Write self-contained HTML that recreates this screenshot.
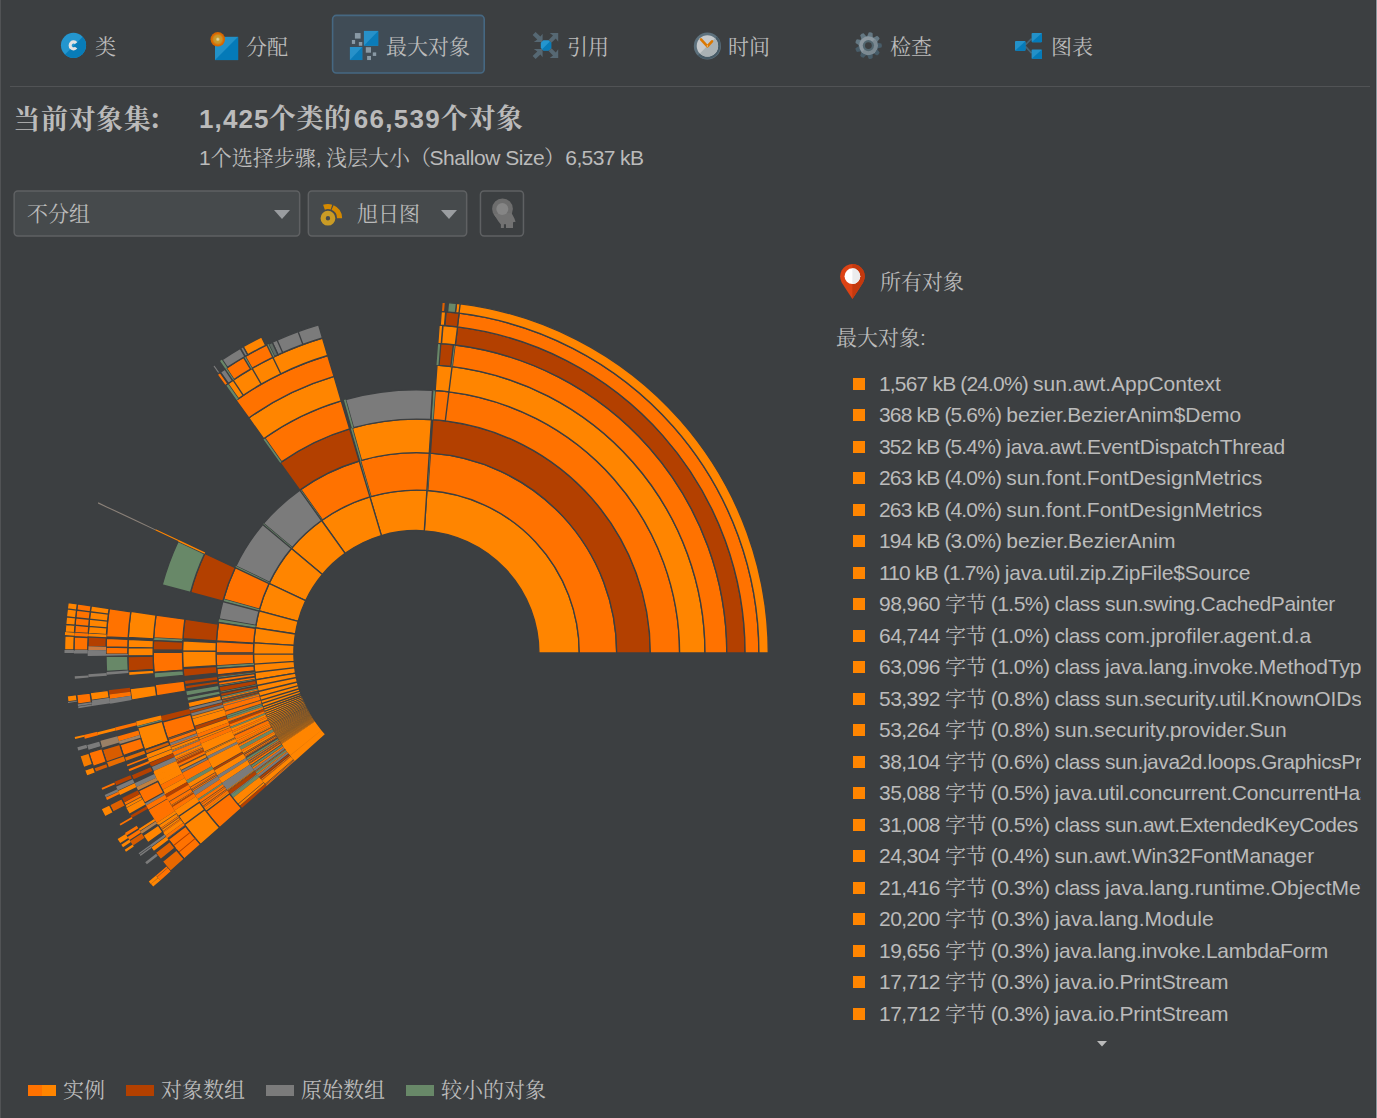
<!DOCTYPE html>
<html lang="zh">
<head>
<meta charset="utf-8">
<title>JProfiler - 最大对象</title>
<style>
html,body{margin:0;padding:0;}
body{width:1377px;height:1118px;overflow:hidden;background:#3c3f41;color:#bbbbbb;font-family:"Liberation Sans","Noto Serif CJK SC",sans-serif;font-size:20px;position:relative;}
.abs{position:absolute;}
.t{position:absolute;white-space:pre;line-height:24px;height:24px;}
.c{display:inline-block;width:21px;text-align:center;font-size:21px;overflow:visible;white-space:pre;line-height:0;font-family:"Liberation Sans","Noto Serif CJK SC",sans-serif;}
.tab{position:absolute;top:34.5px;font-size:21px;line-height:24px;white-space:pre;color:#bbbbbb;}
.edgeL{position:absolute;left:0;top:0;width:1px;height:1118px;background:#515355;}
.edgeR1{position:absolute;left:1375px;top:0;width:1px;height:1118px;background:#37393b;}
.edgeR2{position:absolute;left:1376px;top:0;width:1px;height:1118px;background:#8a969d;}
.sep{position:absolute;left:10px;top:86px;width:1360px;height:1px;background:#515355;}
.sel{position:absolute;left:332px;top:15px;width:151px;height:57px;border:1px solid #4a6a84;border-radius:4px;background:#414a52;}
.combo{position:absolute;top:191px;height:44px;border:1px solid #5e6060;border-radius:4px;background:#45494a;}
.row{position:absolute;left:879px;white-space:pre;font-size:21px;line-height:24px;height:24px;letter-spacing:-0.4px;color:#bbbbbb;}
.bul{position:absolute;left:853px;width:12px;height:12px;background:#ff8500;}
.list{position:absolute;left:836px;top:360px;width:525px;height:680px;overflow:hidden;}
.lg{position:absolute;top:1085px;width:28px;height:11px;}
</style>
</head>
<body>
<div class="edgeL"></div><div class="edgeR1"></div><div class="edgeR2"></div>
<div class="sep"></div>

<svg class="abs" style="left:0;top:0" width="1377" height="86" viewBox="0 0 1377 86">
<defs>
<radialGradient id="og" cx="0.5" cy="0.5" r="0.5"><stop offset="0" stop-color="#dcd6a8"/><stop offset="0.12" stop-color="#d8cc98"/><stop offset="0.3" stop-color="#c99c2c"/><stop offset="0.55" stop-color="#c8942a"/><stop offset="0.8" stop-color="#dc6800"/><stop offset="1" stop-color="#cc6600"/></radialGradient>
<clipPath id="c1"><circle cx="73.5" cy="45.35" r="12.55"/></clipPath>
</defs>
<rect x="332.6" y="15.4" width="151.6" height="57.6" rx="3.8" fill="#404c56" stroke="#466882" stroke-width="1.6"/>
<!-- class icon -->
<circle cx="73.5" cy="45.35" r="12.55" fill="#2496cf"/>
<path d="M89 30.5 L89 61 L58.5 61 Z" fill="#087cb8" clip-path="url(#c1)"/>
<path d="M76.09 47.64 A3.35 3.52 0 1 1 76.09 43.16" fill="none" stroke="#e2e2e2" stroke-width="3.1"/>
<!-- allocation icon -->
<rect x="215" y="36.8" width="23.1" height="23.3" fill="#2291c8"/>
<path d="M238.1 36.8 L238.1 60.1 L215 60.1 Z" fill="#047ab8"/>
<circle cx="217.8" cy="39.3" r="7.25" fill="url(#og)"/>
<!-- biggest objects icon -->
<rect x="363.9" y="30.9" width="14.3" height="14.85" fill="#2791c9"/>
<path d="M378.2 30.9 L378.2 45.75 L363.9 45.75 Z" fill="#0b7cb9"/>
<rect x="349.9" y="47" width="12.35" height="13.05" fill="#2791c9"/>
<path d="M362.25 47 L362.25 60.05 L349.9 60.05 Z" fill="#0b7cb9"/>
<g fill="#8999a5">
<rect x="354.9" y="33.05" width="5.7" height="5.55"/>
<rect x="351.9" y="40.0" width="3.2" height="3.95"/>
<rect x="358.85" y="42.0" width="3.4" height="3.75"/>
<rect x="365.8" y="47.2" width="5.2" height="5.5"/>
<rect x="372.8" y="52.4" width="3.4" height="3.55"/>
<rect x="367.1" y="55.95" width="3.9" height="4.1"/>
</g>
<!-- references icon -->
<g fill="#566873">
<path d="M542.6 41.9 L542.6 33.8 L540.4 36.6 L535.6 31.9 L532.6 34.9 L537.3 39.6 L533.8 41.9 Z"/>
<path d="M542.6 49.1 L542.6 57.2 L540.4 54.4 L535.6 59.1 L532.6 56.1 L537.3 51.4 L533.8 49.1 Z"/>
<path d="M558.2 33.0 L549.7 33.0 L553.0 35.6 L548.6 40.0 L551.4 42.8 L555.8 38.4 L558.2 41.8 Z"/>
<path d="M558.2 58.0 L549.7 58.0 L553.0 55.4 L548.6 51.0 L551.4 48.2 L555.8 52.6 L558.2 49.2 Z"/>
</g>
<path d="M543.4 40.2 L548.6 40.2 L551.2 42.8 L551.2 48.0 L548.6 50.6 L543.4 50.6 L540.8 48.0 L540.8 42.8 Z" fill="#2496cf"/>
<path d="M549.9 41.5 L551.2 42.8 L551.2 48.0 L548.6 50.6 L543.4 50.6 L542.1 49.3 Z" fill="#087cb8"/>
<!-- time icon -->
<circle cx="707.4" cy="46" r="13.6" fill="#5d717d"/>
<path d="M717.0 36.4 A13.6 13.6 0 0 1 697.8 55.6 Z" fill="#475b67"/>
<circle cx="707.4" cy="45.9" r="10.7" fill="#c6c9cb"/>
<path d="M715.0 38.3 A10.7 10.7 0 0 1 699.8 53.5 Z" fill="#a9b1b4"/>
<path d="M701.0 39.4 L707.4 46.3 L712.0 41.3" fill="none" stroke="#dc7800" stroke-width="2.6" stroke-linecap="round" stroke-linejoin="round"/>
<circle cx="707.4" cy="46" r="0.7" fill="#f0c890"/>
<!-- gear icon -->
<g transform="translate(868.4 45.6)">
<circle r="9.8" fill="#566a76"/>
<path transform="rotate(10)" d="M-2.9 -8.5 L-2.0 -13.0 Q0 -13.9 2.0 -13.0 L2.9 -8.5 Z" fill="#647883"/>
<path transform="rotate(50)" d="M-2.9 -8.5 L-2.0 -13.0 Q0 -13.9 2.0 -13.0 L2.9 -8.5 Z" fill="#647883"/>
<path transform="rotate(90)" d="M-2.9 -8.5 L-2.0 -13.0 Q0 -13.9 2.0 -13.0 L2.9 -8.5 Z" fill="#485d69"/>
<path transform="rotate(130)" d="M-2.9 -8.5 L-2.0 -13.0 Q0 -13.9 2.0 -13.0 L2.9 -8.5 Z" fill="#485d69"/>
<path transform="rotate(170)" d="M-2.9 -8.5 L-2.0 -13.0 Q0 -13.9 2.0 -13.0 L2.9 -8.5 Z" fill="#485d69"/>
<path transform="rotate(210)" d="M-2.9 -8.5 L-2.0 -13.0 Q0 -13.9 2.0 -13.0 L2.9 -8.5 Z" fill="#485d69"/>
<path transform="rotate(250)" d="M-2.9 -8.5 L-2.0 -13.0 Q0 -13.9 2.0 -13.0 L2.9 -8.5 Z" fill="#485d69"/>
<path transform="rotate(290)" d="M-2.9 -8.5 L-2.0 -13.0 Q0 -13.9 2.0 -13.0 L2.9 -8.5 Z" fill="#647883"/>
<path transform="rotate(330)" d="M-2.9 -8.5 L-2.0 -13.0 Q0 -13.9 2.0 -13.0 L2.9 -8.5 Z" fill="#647883"/>
<circle r="9.3" fill="#8b979f"/>
<path d="M6.58 -6.58 A9.3 9.3 0 0 1 -6.58 6.58 Z" fill="#7b8991"/>
<circle r="5.6" fill="#52666f"/>
<circle r="3.4" fill="#3c3f41"/>
</g>
<!-- graph icon -->
<path d="M1025.6 44.6 L1031.6 38.6 M1025.6 46.6 L1031.6 53.1" stroke="#4a6472" stroke-width="1.6" fill="none"/>
<rect x="1015" y="41.1" width="10.5" height="9.65" rx="0.9" fill="#2391c9"/><path d="M1025.2 41.4 L1025.5 42.0 L1025.5 49.85 Q1025.5 50.75 1024.6 50.75 L1015.9 50.75 L1015.3 50.45 Z" fill="#057bb9"/>
<rect x="1031.6" y="33.05" width="10.4" height="9.15" rx="0.9" fill="#2391c9"/><path d="M1041.7 33.349999999999994 L1042.0 33.949999999999996 L1042.0 41.3 Q1042.0 42.199999999999996 1041.1 42.199999999999996 L1032.5 42.199999999999996 L1031.8999999999999 41.9 Z" fill="#057bb9"/>
<rect x="1031.6" y="49.5" width="10.4" height="9.3" rx="0.9" fill="#2391c9"/><path d="M1041.7 49.8 L1042.0 50.4 L1042.0 57.9 Q1042.0 58.8 1041.1 58.8 L1032.5 58.8 L1031.8999999999999 58.5 Z" fill="#057bb9"/>
</svg>
<div class="tab" style="left:95px"><span class="c" style="width:21px;">类</span></div>
<div class="tab" style="left:246px"><span class="c" style="width:21px;">分</span><span class="c" style="width:21px;">配</span></div>
<div class="tab" style="left:386px"><span class="c" style="width:21px;">最</span><span class="c" style="width:21px;">大</span><span class="c" style="width:21px;">对</span><span class="c" style="width:21px;">象</span></div>
<div class="tab" style="left:567px"><span class="c" style="width:21px;">引</span><span class="c" style="width:21px;">用</span></div>
<div class="tab" style="left:728px"><span class="c" style="width:21px;">时</span><span class="c" style="width:21px;">间</span></div>
<div class="tab" style="left:890px"><span class="c" style="width:21px;">检</span><span class="c" style="width:21px;">查</span></div>
<div class="tab" style="left:1051px"><span class="c" style="width:21px;">图</span><span class="c" style="width:21px;">表</span></div>
<div class="t" style="left:13px;top:104px;font-size:27px;font-weight:bold;line-height:32px;height:32px;"><span class="c" style="width:27.6px;font-size:27px;">当</span><span class="c" style="width:27.6px;font-size:27px;">前</span><span class="c" style="width:27.6px;font-size:27px;">对</span><span class="c" style="width:27.6px;font-size:27px;">象</span><span class="c" style="width:27.6px;font-size:27px;">集</span></div>
<div class="t" style="left:148px;top:104px;font-size:27px;font-weight:bold;line-height:32px;height:32px;"><span class="c" style="width:27px;font-size:27px;">：</span></div>
<div class="t" style="left:199px;top:103px;font-size:26px;font-weight:bold;line-height:32px;height:32px;letter-spacing:1.1px">1,425</div>
<div class="t" style="left:353.8px;top:103px;font-size:26px;font-weight:bold;line-height:32px;height:32px;letter-spacing:1.3px">66,539</div>
<div class="t" style="left:268.5px;top:103px;font-size:27px;font-weight:bold;line-height:32px;height:32px;"><span class="c" style="width:27.6px;font-size:27px;">个</span><span class="c" style="width:27.6px;font-size:27px;">类</span><span class="c" style="width:27.6px;font-size:27px;">的</span></div>
<div class="t" style="left:440.5px;top:103px;font-size:27px;font-weight:bold;line-height:32px;height:32px;"><span class="c" style="width:27.6px;font-size:27px;">个</span><span class="c" style="width:27.6px;font-size:27px;">对</span><span class="c" style="width:27.6px;font-size:27px;">象</span></div>
<div class="t" style="left:199px;top:146px;font-size:21px;letter-spacing:0px">1<span class="c" style="width:21px;font-size:21px;letter-spacing:0;">个</span><span class="c" style="width:21px;font-size:21px;letter-spacing:0;">选</span><span class="c" style="width:21px;font-size:21px;letter-spacing:0;">择</span><span class="c" style="width:21px;font-size:21px;letter-spacing:0;">步</span><span class="c" style="width:21px;font-size:21px;letter-spacing:0;">骤</span>,</div>
<div class="t" style="left:326px;top:146px;font-size:21px;letter-spacing:0px"><span class="c" style="width:21px;font-size:21px;letter-spacing:0;">浅</span><span class="c" style="width:21px;font-size:21px;letter-spacing:0;">层</span><span class="c" style="width:21px;font-size:21px;letter-spacing:0;">大</span><span class="c" style="width:21px;font-size:21px;letter-spacing:0;">小</span><span class="c" style="width:21px;font-size:21px;letter-spacing:0;">（</span></div>
<div class="t" style="left:429.5px;top:146px;font-size:21px;letter-spacing:-0.45px">Shallow Size</div>
<div class="t" style="left:544px;top:146px;font-size:21px;letter-spacing:0px"><span class="c" style="width:21px;font-size:21px;letter-spacing:0;">）</span></div>
<div class="t" style="left:565.3px;top:146px;font-size:21px;letter-spacing:-0.6px">6,537 kB</div>
<svg class="abs" style="left:0;top:186px" width="540" height="56" viewBox="0 186 540 56">
<g fill="#464a4c" stroke="#5f6163" stroke-width="1.5">
<rect x="14.15" y="190.95" width="285.5" height="45" rx="3.6"/>
<rect x="308.35" y="190.95" width="158.3" height="45" rx="3.6"/>
<rect x="480.45" y="190.95" width="43" height="45" rx="3.6" fill="#3c3f41"/>
</g>
<path d="M274 210 L290 210 L282 219 Z" fill="#9a9da0"/>
<path d="M441 210 L457 210 L449 219 Z" fill="#9a9da0"/>
<!-- sunburst icon -->
<circle cx="327.95" cy="218.2" r="4.8" fill="none" stroke="#c99b25" stroke-width="5.2"/>
<path d="M337.05 218.20L342.15 218.20A14.2 14.2 0 0 0 333.61 205.18L331.58 209.85A9.1 9.1 0 0 1 337.05 218.20ZM330.69 209.52L332.22 204.66A14.2 14.2 0 0 0 323.09 204.86L324.84 209.65A9.1 9.1 0 0 1 330.69 209.52Z" fill="#d48900"/>
<!-- pin/award disabled icon -->
<circle cx="502.5" cy="208.8" r="10.4" fill="#6d6d6d"/>
<path d="M493.6 214 L498.5 221.5 L500.9 224.5 L500.9 228 L503.9 228 L503.9 224.3 L506 224.3 L506 228 L513 228 L513 222.3 L515.6 221.8 L514.2 218 L511.5 213 Z" fill="#727272"/>
<circle cx="502.3" cy="208.9" r="6" fill="#858585"/>
</svg>
<div class="t" style="left:27px;top:202px;font-size:21px;"><span class="c" style="width:21px;">不</span><span class="c" style="width:21px;">分</span><span class="c" style="width:21px;">组</span></div>
<div class="t" style="left:357px;top:202px;font-size:21px;"><span class="c" style="width:21px;">旭</span><span class="c" style="width:21px;">日</span><span class="c" style="width:21px;">图</span></div>
<svg class="abs" style="left:0;top:250px" width="820" height="700" viewBox="0 250 820 700">
<path fill="#ff8500" stroke="#3c3f41" stroke-width="1.35" d="M538.9 653.0L579.3 653.0A162.9 162.9 0 0 0 426.9 490.4L424.3 530.8A122.5 122.5 0 0 1 538.9 653.0Z"/>
<path fill="#ff7200" stroke="#3c3f41" stroke-width="1.35" d="M579.3 653.0L616.7 653.0A200.3 200.3 0 0 0 430.4 453.2L427.8 490.5A162.9 162.9 0 0 1 579.3 653.0Z"/>
<path fill="#688868" d="M427.8 490.5L430.4 453.2A200.3 200.3 0 0 0 429.3 453.1L426.9 490.4A162.9 162.9 0 0 1 427.8 490.5Z"/>
<path fill="#b34000" stroke="#3c3f41" stroke-width="1.35" d="M616.7 653.0L650.3 653.0A233.9 233.9 0 0 0 432.7 419.7L430.4 453.2A200.3 200.3 0 0 1 616.7 653.0Z"/>
<path fill="#ff7200" stroke="#3c3f41" stroke-width="1.35" d="M650.3 653.0L679.6 653.0A263.2 263.2 0 0 0 448.9 391.8L445.3 420.9A233.9 233.9 0 0 1 650.3 653.0ZM445.3 420.9L448.9 391.8A263.2 263.2 0 0 0 435.2 390.5L433.1 419.7A233.9 233.9 0 0 1 445.3 420.9Z"/>
<path fill="#688868" d="M433.1 419.7L435.2 390.5A263.2 263.2 0 0 0 433.4 390.3L431.5 419.6A233.9 233.9 0 0 1 433.1 419.7Z"/>
<path fill="#ff8500" stroke="#3c3f41" stroke-width="1.35" d="M679.6 653.0L705.0 653.0A288.6 288.6 0 0 0 452.1 366.6L448.9 391.8A263.2 263.2 0 0 1 679.6 653.0ZM448.9 391.8L452.1 366.6A288.6 288.6 0 0 0 437.0 365.1L435.2 390.5A263.2 263.2 0 0 1 448.9 391.8Z"/>
<path fill="#ff7200" stroke="#3c3f41" stroke-width="1.35" d="M705.0 653.0L726.8 653.0A310.4 310.4 0 0 0 455.0 345.0L452.3 366.6A288.6 288.6 0 0 1 705.0 653.0Z"/>
<path fill="#688868" d="M452.3 366.6L455.0 345.0A310.4 310.4 0 0 0 453.4 344.8L450.8 366.5A288.6 288.6 0 0 1 452.3 366.6Z"/>
<path fill="#b34000" stroke="#3c3f41" stroke-width="1.35" d="M450.8 366.5L453.4 344.8A310.4 310.4 0 0 0 440.8 343.6L439.0 365.3A288.6 288.6 0 0 1 450.8 366.5Z"/>
<path fill="#688868" d="M438.5 365.3L440.2 343.5A310.4 310.4 0 0 0 438.1 343.4L436.5 365.1A288.6 288.6 0 0 1 438.5 365.3Z"/>
<path fill="#b34000" stroke="#3c3f41" stroke-width="1.35" d="M726.8 653.0L745.1 653.0A328.7 328.7 0 0 0 457.6 326.9L455.3 345.0A310.4 310.4 0 0 1 726.8 653.0Z"/>
<path fill="#ff8500" stroke="#3c3f41" stroke-width="1.35" d="M455.3 345.0L457.6 326.9A328.7 328.7 0 0 0 443.0 325.4L441.5 343.6A310.4 310.4 0 0 1 455.3 345.0ZM441.3 343.6L442.8 325.4A328.7 328.7 0 0 0 439.1 325.1L437.8 343.3A310.4 310.4 0 0 1 441.3 343.6Z"/>
<path fill="#ff7200" stroke="#3c3f41" stroke-width="1.35" d="M745.1 653.0L758.9 653.0A342.5 342.5 0 0 0 459.1 313.2L457.4 326.9A328.7 328.7 0 0 1 745.1 653.0Z"/>
<path fill="#b34000" stroke="#3c3f41" stroke-width="1.35" d="M457.4 326.9L459.1 313.2A342.5 342.5 0 0 0 446.1 311.8L444.9 325.5A328.7 328.7 0 0 1 457.4 326.9Z"/>
<path fill="#ff8500" stroke="#3c3f41" stroke-width="1.35" d="M444.5 325.5L445.7 311.8A342.5 342.5 0 0 0 441.2 311.4L440.2 325.2A328.7 328.7 0 0 1 444.5 325.5ZM758.9 653.0L768.3 653.0A351.9 351.9 0 0 0 460.2 303.8L459.0 313.2A342.5 342.5 0 0 1 758.9 653.0ZM459.0 313.2L460.2 303.8A351.9 351.9 0 0 0 456.5 303.4L455.4 312.7A342.5 342.5 0 0 1 459.0 313.2Z"/>
<path fill="#688868" stroke="#3c3f41" stroke-width="1.35" d="M455.4 312.7L456.5 303.4A351.9 351.9 0 0 0 448.4 302.6L447.6 311.9A342.5 342.5 0 0 1 455.4 312.7Z"/>
<path fill="#e06000" stroke="#3c3f41" stroke-width="1.35" d="M444.7 311.7L445.5 302.3A351.9 351.9 0 0 0 442.0 302.0L441.3 311.4A342.5 342.5 0 0 1 444.7 311.7Z"/>
<path fill="#ff8500" stroke="#3c3f41" stroke-width="1.35" d="M424.3 530.8L426.9 490.4A162.9 162.9 0 0 0 369.9 496.9L381.4 535.6A122.5 122.5 0 0 1 424.3 530.8Z"/>
<path fill="#ff7200" stroke="#3c3f41" stroke-width="1.35" d="M426.9 490.4L429.3 453.1A200.3 200.3 0 0 0 360.5 460.7L371.0 496.6A162.9 162.9 0 0 1 426.9 490.4Z"/>
<path fill="#688868" d="M371.0 496.6L360.5 460.7A200.3 200.3 0 0 0 359.2 461.0L369.9 496.9A162.9 162.9 0 0 1 371.0 496.6Z"/>
<path fill="#ff8500" stroke="#3c3f41" stroke-width="1.35" d="M429.3 453.1L431.5 419.6A233.9 233.9 0 0 0 352.3 428.0L361.5 460.4A200.3 200.3 0 0 1 429.3 453.1Z"/>
<path fill="#688868" d="M361.5 460.4L352.3 428.0A233.9 233.9 0 0 0 350.8 428.5L360.2 460.8A200.3 200.3 0 0 1 361.5 460.4Z"/>
<path fill="#7b7b7b" stroke="#3c3f41" stroke-width="1.35" d="M430.7 419.5L432.5 390.3A263.2 263.2 0 0 0 345.6 399.5L353.5 427.7A233.9 233.9 0 0 1 430.7 419.5Z"/>
<path fill="#688868" d="M353.5 427.7L345.6 399.5A263.2 263.2 0 0 0 343.9 400.0L351.9 428.2A233.9 233.9 0 0 1 353.5 427.7Z"/>
<path fill="#ff8500" stroke="#3c3f41" stroke-width="1.35" d="M381.4 535.6L369.9 496.9A162.9 162.9 0 0 0 321.6 520.5L345.1 553.4A122.5 122.5 0 0 1 381.4 535.6Z"/>
<path fill="#ff7200" stroke="#3c3f41" stroke-width="1.35" d="M369.9 496.9L359.2 461.0A200.3 200.3 0 0 0 300.8 489.4L322.4 520.0A162.9 162.9 0 0 1 369.9 496.9Z"/>
<path fill="#688868" d="M322.4 520.0L300.8 489.4A200.3 200.3 0 0 0 299.8 490.1L321.6 520.5A162.9 162.9 0 0 1 322.4 520.0Z"/>
<path fill="#b34000" stroke="#3c3f41" stroke-width="1.35" d="M359.2 461.0L349.6 428.8A233.9 233.9 0 0 0 280.2 462.8L299.8 490.1A200.3 200.3 0 0 1 359.2 461.0Z"/>
<path fill="#ff7200" stroke="#3c3f41" stroke-width="1.35" d="M349.6 428.8L341.2 400.8A263.2 263.2 0 0 0 264.7 437.9L281.6 461.9A233.9 233.9 0 0 1 349.6 428.8Z"/>
<path fill="#688868" d="M281.6 461.9L264.7 437.9A263.2 263.2 0 0 0 263.2 439.0L280.2 462.8A233.9 233.9 0 0 1 281.6 461.9Z"/>
<path fill="#ff8500" stroke="#3c3f41" stroke-width="1.35" d="M341.2 400.8L334.0 376.4A288.6 288.6 0 0 0 248.8 418.0L263.6 438.7A263.2 263.2 0 0 1 341.2 400.8Z"/>
<path fill="#ff7200" stroke="#3c3f41" stroke-width="1.35" d="M334.0 376.4L327.7 355.5A310.4 310.4 0 0 0 236.1 400.3L248.8 418.0A288.6 288.6 0 0 1 334.0 376.4Z"/>
<path fill="#ff8500" stroke="#3c3f41" stroke-width="1.35" d="M327.7 355.5L322.5 338.0A328.7 328.7 0 0 0 272.8 357.3L280.8 373.8A310.4 310.4 0 0 1 327.7 355.5ZM280.8 373.8L272.8 357.3A328.7 328.7 0 0 0 252.1 368.3L261.2 384.2A310.4 310.4 0 0 1 280.8 373.8ZM261.2 384.2L252.1 368.3A328.7 328.7 0 0 0 233.1 380.2L243.3 395.4A310.4 310.4 0 0 1 261.2 384.2ZM243.3 395.4L233.1 380.2A328.7 328.7 0 0 0 227.9 383.7L238.4 398.7A310.4 310.4 0 0 1 243.3 395.4Z"/>
<path fill="#688868" d="M238.4 398.7L227.9 383.7A328.7 328.7 0 0 0 226.0 385.1L236.6 400.0A310.4 310.4 0 0 1 238.4 398.7Z"/>
<path fill="#7b7b7b" stroke="#3c3f41" stroke-width="1.35" d="M322.5 338.0L318.6 324.8A342.5 342.5 0 0 0 298.1 331.6L302.9 344.5A328.7 328.7 0 0 1 322.5 338.0ZM302.9 344.5L298.1 331.6A342.5 342.5 0 0 0 277.1 340.1L282.7 352.7A328.7 328.7 0 0 1 302.9 344.5ZM282.7 352.7L277.1 340.1A342.5 342.5 0 0 0 272.2 342.3L278.0 354.9A328.7 328.7 0 0 1 282.7 352.7Z"/>
<path fill="#5f6a63" stroke="#3c3f41" stroke-width="1.35" d="M278.0 354.9L272.2 342.3A342.5 342.5 0 0 0 268.4 344.1L274.4 356.6A328.7 328.7 0 0 1 278.0 354.9Z"/>
<path fill="#688868" d="M274.4 356.6L268.4 344.1A342.5 342.5 0 0 0 266.8 344.9L272.8 357.3A328.7 328.7 0 0 1 274.4 356.6Z"/>
<path fill="#ff7200" stroke="#3c3f41" stroke-width="1.35" d="M272.8 357.3L266.8 344.9A342.5 342.5 0 0 0 245.2 356.4L252.1 368.3A328.7 328.7 0 0 1 272.8 357.3Z"/>
<path fill="#688868" d="M252.1 368.3L245.2 356.4A342.5 342.5 0 0 0 243.6 357.3L250.6 369.2A328.7 328.7 0 0 1 252.1 368.3Z"/>
<path fill="#ff7200" stroke="#3c3f41" stroke-width="1.35" d="M250.6 369.2L243.6 357.3A342.5 342.5 0 0 0 226.4 368.1L234.0 379.5A328.7 328.7 0 0 1 250.6 369.2Z"/>
<path fill="#688868" d="M234.0 379.5L226.4 368.1A342.5 342.5 0 0 0 224.9 369.1L232.6 380.5A328.7 328.7 0 0 1 234.0 379.5Z"/>
<path fill="#7b7b7b" stroke="#3c3f41" stroke-width="1.35" d="M232.6 380.5L224.9 369.1A342.5 342.5 0 0 0 220.4 372.1L228.3 383.4A328.7 328.7 0 0 1 232.6 380.5Z"/>
<path fill="#ff7200" stroke="#3c3f41" stroke-width="1.35" d="M227.9 383.7L220.0 372.4A342.5 342.5 0 0 0 217.0 374.5L225.1 385.7A328.7 328.7 0 0 1 227.9 383.7Z"/>
<path fill="#ff8500" stroke="#3c3f41" stroke-width="1.35" d="M265.7 345.4L261.6 337.0A351.9 351.9 0 0 0 243.1 346.7L247.7 354.9A342.5 342.5 0 0 1 265.7 345.4Z"/>
<path fill="#7b7b7b" stroke="#3c3f41" stroke-width="1.35" d="M247.7 354.9L243.1 346.7A351.9 351.9 0 0 0 240.5 348.2L245.2 356.4A342.5 342.5 0 0 1 247.7 354.9ZM244.9 356.5L240.2 348.4A351.9 351.9 0 0 0 222.2 359.6L227.4 367.4A342.5 342.5 0 0 1 244.9 356.5Z"/>
<path fill="#688868" d="M227.1 367.6L221.9 359.7A351.9 351.9 0 0 0 220.1 360.9L225.4 368.7A342.5 342.5 0 0 1 227.1 367.6Z"/>
<path fill="#7b7b7b" stroke="#3c3f41" stroke-width="1.35" d="M220.0 372.4L214.6 364.7A351.9 351.9 0 0 0 212.6 366.2L218.0 373.8A342.5 342.5 0 0 1 220.0 372.4Z"/>
<path fill="#ff8500" stroke="#3c3f41" stroke-width="1.35" d="M345.1 553.4L321.6 520.5A162.9 162.9 0 0 0 291.4 548.5L322.4 574.4A122.5 122.5 0 0 1 345.1 553.4Z"/>
<path fill="#7b7b7b" stroke="#3c3f41" stroke-width="1.35" d="M321.6 520.5L299.8 490.1A200.3 200.3 0 0 0 263.6 523.4L292.2 547.6A162.9 162.9 0 0 1 321.6 520.5Z"/>
<path fill="#688868" d="M292.2 547.6L263.6 523.4A200.3 200.3 0 0 0 262.7 524.5L291.4 548.5A162.9 162.9 0 0 1 292.2 547.6Z"/>
<path fill="#ff8500" stroke="#3c3f41" stroke-width="1.35" d="M322.4 574.4L291.4 548.5A162.9 162.9 0 0 0 269.1 583.5L305.6 600.7A122.5 122.5 0 0 1 322.4 574.4Z"/>
<path fill="#7b7b7b" stroke="#3c3f41" stroke-width="1.35" d="M291.4 548.5L262.7 524.5A200.3 200.3 0 0 0 235.9 566.1L269.6 582.4A162.9 162.9 0 0 1 291.4 548.5Z"/>
<path fill="#688868" d="M269.6 582.4L235.9 566.1A200.3 200.3 0 0 0 235.2 567.6L269.1 583.5A162.9 162.9 0 0 1 269.6 582.4Z"/>
<path fill="#ff8500" stroke="#3c3f41" stroke-width="1.35" d="M305.6 600.7L269.1 583.5A162.9 162.9 0 0 0 259.1 610.8L298.1 621.3A122.5 122.5 0 0 1 305.6 600.7Z"/>
<path fill="#ff7200" stroke="#3c3f41" stroke-width="1.35" d="M269.0 583.6L235.2 567.7A200.3 200.3 0 0 0 223.5 599.1L259.5 609.2A162.9 162.9 0 0 1 269.0 583.6Z"/>
<path fill="#688868" d="M259.5 609.2L223.5 599.1A200.3 200.3 0 0 0 222.9 601.2L259.1 610.8A162.9 162.9 0 0 1 259.5 609.2Z"/>
<path fill="#b34000" stroke="#3c3f41" stroke-width="1.35" d="M235.2 567.7L204.8 553.4A233.9 233.9 0 0 0 190.5 592.5L222.9 601.2A200.3 200.3 0 0 1 235.2 567.7Z"/>
<path fill="#688868" stroke="#3c3f41" stroke-width="1.35" d="M204.6 553.8L178.1 541.4A263.2 263.2 0 0 0 162.2 584.9L190.5 592.5A233.9 233.9 0 0 1 204.6 553.8Z"/>
<path fill="#ff8500" d="M205.2 552.5L178.7 539.9A263.2 263.2 0 0 0 178.1 541.4L204.6 553.8A233.9 233.9 0 0 1 205.2 552.5ZM178.6 540.1L155.7 529.2A288.6 288.6 0 0 0 155.2 530.3L178.2 541.1A263.2 263.2 0 0 1 178.6 540.1Z"/>
<path fill="#8a8078" d="M155.6 529.4L135.9 520.1A310.4 310.4 0 0 0 135.4 521.1L155.2 530.3A288.6 288.6 0 0 1 155.6 529.4ZM135.9 520.1L119.4 512.3A328.7 328.7 0 0 0 118.9 513.3L135.4 521.1A310.4 310.4 0 0 1 135.9 520.1ZM119.4 512.3L106.9 506.4A342.5 342.5 0 0 0 106.4 507.4L118.9 513.3A328.7 328.7 0 0 1 119.4 512.3ZM106.9 506.4L98.4 502.3A351.9 351.9 0 0 0 97.9 503.4L106.4 507.4A342.5 342.5 0 0 1 106.9 506.4Z"/>
<path fill="#ff8500" stroke="#3c3f41" stroke-width="1.35" d="M298.1 621.3L259.1 610.8A162.9 162.9 0 0 0 255.5 627.8L295.4 634.0A122.5 122.5 0 0 1 298.1 621.3Z"/>
<path fill="#7b7b7b" stroke="#3c3f41" stroke-width="1.35" d="M259.0 611.1L222.8 601.5A200.3 200.3 0 0 0 219.0 618.9L255.9 625.3A162.9 162.9 0 0 1 259.0 611.1Z"/>
<path fill="#688868" d="M255.8 625.6L219.0 619.3A200.3 200.3 0 0 0 218.6 621.7L255.5 627.5A162.9 162.9 0 0 1 255.8 625.6Z"/>
<path fill="#ff8500" stroke="#3c3f41" stroke-width="1.35" d="M295.4 634.0L255.5 627.8A162.9 162.9 0 0 0 253.8 642.8L294.1 645.3A122.5 122.5 0 0 1 295.4 634.0Z"/>
<path fill="#ff7200" stroke="#3c3f41" stroke-width="1.35" d="M255.4 628.4L218.4 622.7A200.3 200.3 0 0 0 216.5 640.8L253.8 643.1A162.9 162.9 0 0 1 255.4 628.4Z"/>
<path fill="#b34000" stroke="#3c3f41" stroke-width="1.35" d="M218.2 624.1L184.9 619.2A233.9 233.9 0 0 0 182.9 638.7L216.5 640.8A200.3 200.3 0 0 1 218.2 624.1Z"/>
<path fill="#ff7200" stroke="#3c3f41" stroke-width="1.35" d="M184.9 619.2L156.0 615.0A263.2 263.2 0 0 0 153.6 637.8L182.9 639.5A233.9 233.9 0 0 1 184.9 619.2Z"/>
<path fill="#688868" d="M182.9 639.5L153.6 637.8A263.2 263.2 0 0 0 153.5 640.1L182.8 641.6A233.9 233.9 0 0 1 182.9 639.5Z"/>
<path fill="#ff8500" stroke="#3c3f41" stroke-width="1.35" d="M156.0 615.0L130.8 611.3A288.6 288.6 0 0 0 128.2 637.4L153.6 638.8A263.2 263.2 0 0 1 156.0 615.0Z"/>
<path fill="#ff7200" stroke="#3c3f41" stroke-width="1.35" d="M130.8 611.8L109.2 608.7A310.4 310.4 0 0 0 106.4 636.8L128.2 637.9A288.6 288.6 0 0 1 130.8 611.8Z"/>
<path fill="#ff8500" stroke="#3c3f41" stroke-width="1.35" d="M109.2 608.5L91.1 605.8A328.7 328.7 0 0 0 90.3 611.8L108.4 614.1A310.4 310.4 0 0 1 109.2 608.5ZM108.4 614.1L90.3 611.8A328.7 328.7 0 0 0 89.4 619.2L107.6 621.1A310.4 310.4 0 0 1 108.4 614.1ZM107.6 621.1L89.4 619.2A328.7 328.7 0 0 0 88.8 626.4L107.0 627.8A310.4 310.4 0 0 1 107.6 621.1ZM107.0 627.8L88.8 626.4A328.7 328.7 0 0 0 88.3 633.5L106.5 634.6A310.4 310.4 0 0 1 107.0 627.8Z"/>
<path fill="#ff8500" d="M106.5 634.6L88.3 633.5A328.7 328.7 0 0 0 88.1 636.9L106.4 637.8A310.4 310.4 0 0 1 106.5 634.6Z"/>
<path fill="#ff7200" stroke="#3c3f41" stroke-width="1.35" d="M91.1 605.8L77.4 603.9A342.5 342.5 0 0 0 76.6 610.1L90.3 611.8A328.7 328.7 0 0 1 91.1 605.8ZM90.3 611.8L76.6 610.1A342.5 342.5 0 0 0 75.7 617.8L89.4 619.2A328.7 328.7 0 0 1 90.3 611.8ZM89.4 619.2L75.7 617.8A342.5 342.5 0 0 0 75.0 625.2L88.8 626.4A328.7 328.7 0 0 1 89.4 619.2ZM88.8 626.4L75.0 625.2A342.5 342.5 0 0 0 74.5 632.7L88.3 633.5A328.7 328.7 0 0 1 88.8 626.4Z"/>
<path fill="#ff7200" d="M88.3 633.5L74.5 632.7A342.5 342.5 0 0 0 74.3 636.3L88.1 636.9A328.7 328.7 0 0 1 88.3 633.5Z"/>
<path fill="#ff8500" stroke="#3c3f41" stroke-width="1.35" d="M77.4 603.9L68.1 602.5A351.9 351.9 0 0 0 67.3 608.9L76.6 610.1A342.5 342.5 0 0 1 77.4 603.9ZM76.6 610.1L67.3 608.9A351.9 351.9 0 0 0 66.4 616.8L75.7 617.8A342.5 342.5 0 0 1 76.6 610.1ZM75.7 617.8L66.4 616.8A351.9 351.9 0 0 0 65.7 624.5L75.0 625.2A342.5 342.5 0 0 1 75.7 617.8ZM75.0 625.2L65.7 624.5A351.9 351.9 0 0 0 65.1 632.1L74.5 632.7A342.5 342.5 0 0 1 75.0 625.2Z"/>
<path fill="#ff8500" d="M74.5 632.7L65.1 632.1A351.9 351.9 0 0 0 64.9 635.8L74.3 636.3A342.5 342.5 0 0 1 74.5 632.7Z"/>
<path fill="#ff8500" stroke="#3c3f41" stroke-width="1.35" d="M294.1 645.3L253.8 642.8A162.9 162.9 0 0 0 253.5 654.1L293.9 653.9A122.5 122.5 0 0 1 294.1 645.3ZM293.9 653.9L253.5 654.1A162.9 162.9 0 0 0 253.9 664.1L294.2 661.3A122.5 122.5 0 0 1 293.9 653.9ZM294.2 661.3L253.9 664.1A162.9 162.9 0 0 0 254.7 672.4L294.8 667.6A122.5 122.5 0 0 1 294.2 661.3ZM294.8 667.6L254.7 672.4A162.9 162.9 0 0 0 255.7 679.9L295.6 673.2A122.5 122.5 0 0 1 294.8 667.6Z"/>
<path fill="#ff7200" stroke="#3c3f41" stroke-width="1.35" d="M253.8 643.6L216.4 641.5A200.3 200.3 0 0 0 216.1 653.0L253.5 653.0A162.9 162.9 0 0 1 253.8 643.6Z"/>
<path fill="#ff7200" stroke="#3c3f41" stroke-width="0.50" d="M253.5 653.0L216.1 653.0A200.3 200.3 0 0 0 216.1 654.0L253.5 653.9A162.9 162.9 0 0 1 253.5 653.0Z"/>
<path fill="#ff7200" stroke="#3c3f41" stroke-width="1.35" d="M253.5 653.9L216.1 654.0A200.3 200.3 0 0 0 216.5 665.9L253.8 663.5A162.9 162.9 0 0 1 253.5 653.9Z"/>
<path fill="#688868" d="M253.8 663.5L216.5 665.9A200.3 200.3 0 0 0 216.7 668.0L254.0 665.2A162.9 162.9 0 0 1 253.8 663.5Z"/>
<path fill="#ff7200" stroke="#3c3f41" stroke-width="1.35" d="M254.0 665.8L216.7 668.7A200.3 200.3 0 0 0 217.3 675.0L254.5 670.9A162.9 162.9 0 0 1 254.0 665.8Z"/>
<path fill="#b34000" stroke="#3c3f41" stroke-width="1.35" d="M254.5 671.2L217.3 675.3A200.3 200.3 0 0 0 217.6 677.1L254.7 672.6A162.9 162.9 0 0 1 254.5 671.2Z"/>
<path fill="#688868" d="M254.7 672.6L217.6 677.1A200.3 200.3 0 0 0 217.7 678.1L254.8 673.4A162.9 162.9 0 0 1 254.7 672.6Z"/>
<path fill="#ff7200" stroke="#3c3f41" stroke-width="1.35" d="M254.8 673.7L217.7 678.5A200.3 200.3 0 0 0 218.2 681.9L255.2 676.5A162.9 162.9 0 0 1 254.8 673.7ZM255.2 676.8L218.2 682.3A200.3 200.3 0 0 0 218.7 685.4L255.6 679.3A162.9 162.9 0 0 1 255.2 676.8Z"/>
<path fill="#688868" d="M255.6 679.3L218.7 685.4A200.3 200.3 0 0 0 218.9 686.4L255.8 680.2A162.9 162.9 0 0 1 255.6 679.3Z"/>
<path fill="#ff8500" stroke="#3c3f41" stroke-width="1.35" d="M216.4 642.5L182.8 640.8A233.9 233.9 0 0 0 182.5 650.8L216.1 651.1A200.3 200.3 0 0 1 216.4 642.5ZM216.1 651.4L182.5 651.2A233.9 233.9 0 0 0 183.0 667.7L216.5 665.6A200.3 200.3 0 0 1 216.1 651.4Z"/>
<path fill="#b34000" stroke="#3c3f41" stroke-width="1.35" d="M216.5 666.3L183.0 668.5A233.9 233.9 0 0 0 183.7 676.6L217.1 673.2A200.3 200.3 0 0 1 216.5 666.3ZM217.5 676.4L184.1 680.3A233.9 233.9 0 0 0 184.7 684.7L218.0 680.2A200.3 200.3 0 0 1 217.5 676.4ZM218.0 680.9L184.8 685.6A233.9 233.9 0 0 0 185.3 689.2L218.5 684.0A200.3 200.3 0 0 1 218.0 680.9ZM182.8 642.0L153.5 640.6A263.2 263.2 0 0 0 153.2 649.8L182.5 650.1A233.9 233.9 0 0 1 182.8 642.0ZM182.5 650.6L153.2 650.2A263.2 263.2 0 0 0 153.2 651.6L182.5 651.8A233.9 233.9 0 0 1 182.5 650.6Z"/>
<path fill="#ff7200" stroke="#3c3f41" stroke-width="1.35" d="M182.5 652.2L153.2 652.1A263.2 263.2 0 0 0 153.9 672.3L183.1 670.1A233.9 233.9 0 0 1 182.5 652.2Z"/>
<path fill="#688868" stroke="#3c3f41" stroke-width="1.35" d="M183.2 670.5L153.9 672.7A263.2 263.2 0 0 0 154.4 678.2L183.6 675.4A233.9 233.9 0 0 1 183.2 670.5Z"/>
<path fill="#ff7200" stroke="#3c3f41" stroke-width="1.35" d="M184.2 681.1L155.1 684.6A263.2 263.2 0 0 0 156.7 696.0L185.6 691.2A233.9 233.9 0 0 1 184.2 681.1Z"/>
<path fill="#ff8500" stroke="#3c3f41" stroke-width="1.35" d="M153.5 640.6L128.1 639.4A288.6 288.6 0 0 0 127.9 647.5L153.2 647.9A263.2 263.2 0 0 1 153.5 640.6ZM153.2 647.9L127.9 647.5A288.6 288.6 0 0 0 127.8 656.0L153.2 655.8A263.2 263.2 0 0 1 153.2 647.9Z"/>
<path fill="#b34000" stroke="#3c3f41" stroke-width="1.35" d="M153.2 656.2L127.8 656.5A288.6 288.6 0 0 0 128.4 671.1L153.7 669.5A263.2 263.2 0 0 1 153.2 656.2Z"/>
<path fill="#ff8500" stroke="#3c3f41" stroke-width="1.35" d="M153.7 670.0L128.4 671.6A288.6 288.6 0 0 0 128.7 675.6L154.0 673.7A263.2 263.2 0 0 1 153.7 670.0ZM155.2 685.5L130.0 688.7A288.6 288.6 0 0 0 131.7 700.1L156.7 696.0A263.2 263.2 0 0 1 155.2 685.5Z"/>
<path fill="#ff7200" stroke="#3c3f41" stroke-width="1.35" d="M128.1 639.4L106.3 638.4A310.4 310.4 0 0 0 106.1 647.0L127.9 647.5A288.6 288.6 0 0 1 128.1 639.4ZM127.9 647.5L106.1 647.0A310.4 310.4 0 0 0 106.0 654.1L127.8 654.0A288.6 288.6 0 0 1 127.9 647.5Z"/>
<path fill="#7b7b7b" d="M127.8 654.0L106.0 654.1A310.4 310.4 0 0 0 106.0 656.3L127.8 656.0A288.6 288.6 0 0 1 127.8 654.0Z"/>
<path fill="#688868" stroke="#3c3f41" stroke-width="1.35" d="M127.8 656.0L106.0 656.3A310.4 310.4 0 0 0 106.5 671.4L128.3 670.1A288.6 288.6 0 0 1 127.8 656.0Z"/>
<path fill="#7b7b7b" d="M128.3 670.6L106.6 671.9A310.4 310.4 0 0 0 106.8 674.7L128.5 673.1A288.6 288.6 0 0 1 128.3 670.6Z"/>
<path fill="#b34000" d="M129.9 687.7L108.2 690.3A310.4 310.4 0 0 0 108.8 694.6L130.4 691.7A288.6 288.6 0 0 1 129.9 687.7Z"/>
<path fill="#ff7200" d="M130.4 691.7L108.8 694.6A310.4 310.4 0 0 0 109.4 698.9L131.0 695.7A288.6 288.6 0 0 1 130.4 691.7Z"/>
<path fill="#7b7b7b" d="M131.0 695.7L109.4 698.9A310.4 310.4 0 0 0 110.2 703.7L131.7 700.1A288.6 288.6 0 0 1 131.0 695.7Z"/>
<path fill="#b34000" stroke="#3c3f41" stroke-width="1.35" d="M106.4 637.8L88.1 636.9A328.7 328.7 0 0 0 87.8 646.3L106.1 646.7A310.4 310.4 0 0 1 106.4 637.8Z"/>
<path fill="#c87a40" d="M106.1 646.7L87.8 646.3A328.7 328.7 0 0 0 87.7 650.1L106.0 650.3A310.4 310.4 0 0 1 106.1 646.7Z"/>
<path fill="#7b7b7b" d="M106.0 650.3L87.7 650.1A328.7 328.7 0 0 0 87.7 655.9L106.0 655.7A310.4 310.4 0 0 1 106.0 650.3ZM106.6 673.0L88.4 674.2A328.7 328.7 0 0 0 88.6 677.1L106.8 675.7A310.4 310.4 0 0 1 106.6 673.0Z"/>
<path fill="#ff8500" stroke="#3c3f41" stroke-width="1.35" d="M108.2 690.3L90.1 692.5A328.7 328.7 0 0 0 91.1 700.4L109.3 697.8A310.4 310.4 0 0 1 108.2 690.3Z"/>
<path fill="#7b7b7b" d="M109.3 697.8L91.1 700.4A328.7 328.7 0 0 0 92.0 706.1L110.1 703.2A310.4 310.4 0 0 1 109.3 697.8Z"/>
<path fill="#ff7200" stroke="#3c3f41" stroke-width="1.35" d="M88.1 637.5L74.3 636.9A342.5 342.5 0 0 0 73.9 650.0L87.7 650.1A328.7 328.7 0 0 1 88.1 637.5Z"/>
<path fill="#7b7b7b" d="M87.7 650.1L73.9 650.0A342.5 342.5 0 0 0 73.9 653.6L87.7 653.6A328.7 328.7 0 0 1 87.7 650.1ZM88.5 675.4L74.7 676.3A342.5 342.5 0 0 0 74.9 678.7L88.6 677.6A328.7 328.7 0 0 1 88.5 675.4Z"/>
<path fill="#ff7200" stroke="#3c3f41" stroke-width="1.35" d="M90.2 693.1L76.5 694.7A342.5 342.5 0 0 0 77.8 704.2L91.4 702.2A328.7 328.7 0 0 1 90.2 693.1Z"/>
<path fill="#7b7b7b" d="M91.4 702.2L77.8 704.2A342.5 342.5 0 0 0 78.0 706.0L91.7 703.9A328.7 328.7 0 0 1 91.4 702.2ZM91.7 704.4L78.1 706.6A342.5 342.5 0 0 0 78.4 708.3L92.0 706.1A328.7 328.7 0 0 1 91.7 704.4Z"/>
<path fill="#ff8500" stroke="#3c3f41" stroke-width="1.35" d="M74.3 636.3L64.9 635.8A351.9 351.9 0 0 0 64.5 649.9L73.9 650.0A342.5 342.5 0 0 1 74.3 636.3Z"/>
<path fill="#7b7b7b" d="M73.9 650.0L64.5 649.9A351.9 351.9 0 0 0 64.5 653.0L73.9 653.0A342.5 342.5 0 0 1 73.9 650.0Z"/>
<path fill="#ff8500" stroke="#3c3f41" stroke-width="1.35" d="M76.5 694.7L67.1 695.9A351.9 351.9 0 0 0 67.9 702.0L77.2 700.7A342.5 342.5 0 0 1 76.5 694.7Z"/>
<path fill="#7b7b7b" d="M77.2 700.7L67.9 702.0A351.9 351.9 0 0 0 68.1 702.9L77.4 701.6A342.5 342.5 0 0 1 77.2 700.7Z"/>
<path fill="#ff8500" stroke="#3c3f41" stroke-width="1.35" d="M295.6 673.2L255.7 679.9A162.9 162.9 0 0 0 256.8 685.6L296.4 677.5A122.5 122.5 0 0 1 295.6 673.2ZM296.4 677.5L256.8 685.6A162.9 162.9 0 0 0 258.1 691.5L297.4 682.0A122.5 122.5 0 0 1 296.4 677.5ZM297.4 682.0L258.1 691.5A162.9 162.9 0 0 0 259.4 696.4L298.3 685.6A122.5 122.5 0 0 1 297.4 682.0ZM298.3 685.6L259.4 696.4A162.9 162.9 0 0 0 260.6 700.4L299.2 688.7A122.5 122.5 0 0 1 298.3 685.6ZM299.2 688.7L260.6 700.4A162.9 162.9 0 0 0 261.6 703.7L300.0 691.1A122.5 122.5 0 0 1 299.2 688.7ZM300.0 691.1L261.6 703.7A162.9 162.9 0 0 0 262.7 706.9L300.8 693.5A122.5 122.5 0 0 1 300.0 691.1ZM300.8 693.5L262.7 706.9A162.9 162.9 0 0 0 263.5 709.3L301.5 695.4A122.5 122.5 0 0 1 300.8 693.5Z"/>
<path fill="#ff8500" stroke="#3c3f41" stroke-width="1.04" d="M301.5 695.4L263.5 709.3A162.9 162.9 0 0 0 264.4 711.6L302.1 697.0A122.5 122.5 0 0 1 301.5 695.4Z"/>
<path fill="#ff8500" stroke="#3c3f41" stroke-width="0.97" d="M302.1 697.0L264.4 711.6A162.9 162.9 0 0 0 265.2 713.6L302.7 698.6A122.5 122.5 0 0 1 302.1 697.0Z"/>
<path fill="#ff8500" stroke="#3c3f41" stroke-width="0.90" d="M302.7 698.6L265.2 713.6A162.9 162.9 0 0 0 266.0 715.5L303.3 700.0A122.5 122.5 0 0 1 302.7 698.6Z"/>
<path fill="#ff8500" stroke="#3c3f41" stroke-width="0.84" d="M303.3 700.0L266.0 715.5A162.9 162.9 0 0 0 266.7 717.3L303.8 701.3A122.5 122.5 0 0 1 303.3 700.0Z"/>
<path fill="#ff8500" stroke="#3c3f41" stroke-width="0.78" d="M303.8 701.3L266.7 717.3A162.9 162.9 0 0 0 267.4 718.9L304.4 702.6A122.5 122.5 0 0 1 303.8 701.3Z"/>
<path fill="#ff8500" stroke="#3c3f41" stroke-width="0.72" d="M304.4 702.6L267.4 718.9A162.9 162.9 0 0 0 268.1 720.4L304.9 703.7A122.5 122.5 0 0 1 304.4 702.6Z"/>
<path fill="#ff8500" stroke="#3c3f41" stroke-width="0.67" d="M304.9 703.7L268.1 720.4A162.9 162.9 0 0 0 268.8 721.8L305.4 704.8A122.5 122.5 0 0 1 304.9 703.7Z"/>
<path fill="#ff8500" stroke="#3c3f41" stroke-width="0.63" d="M305.4 704.8L268.8 721.8A162.9 162.9 0 0 0 269.4 723.1L305.8 705.7A122.5 122.5 0 0 1 305.4 704.8Z"/>
<path fill="#ff8500" stroke="#3c3f41" stroke-width="0.62" d="M305.8 705.7L269.4 723.1A162.9 162.9 0 0 0 270.0 724.4L306.3 706.7A122.5 122.5 0 0 1 305.8 705.7ZM306.3 706.7L270.0 724.4A162.9 162.9 0 0 0 270.6 725.7L306.8 707.7A122.5 122.5 0 0 1 306.3 706.7Z"/>
<path fill="#ff8500" stroke="#3c3f41" stroke-width="0.58" d="M306.8 707.7L270.6 725.7A162.9 162.9 0 0 0 271.2 726.9L307.2 708.5A122.5 122.5 0 0 1 306.8 707.7Z"/>
<path fill="#ff8500" stroke="#3c3f41" stroke-width="0.55" d="M307.2 708.5L271.2 726.9A162.9 162.9 0 0 0 271.8 728.0L307.6 709.4A122.5 122.5 0 0 1 307.2 708.5Z"/>
<path fill="#ff8500" stroke="#3c3f41" stroke-width="0.51" d="M307.6 709.4L271.8 728.0A162.9 162.9 0 0 0 272.3 729.0L308.1 710.2A122.5 122.5 0 0 1 307.6 709.4Z"/>
<path fill="#ff8500" stroke="#3c3f41" stroke-width="0.48" d="M308.1 710.2L272.3 729.0A162.9 162.9 0 0 0 272.8 730.0L308.4 710.9A122.5 122.5 0 0 1 308.1 710.2Z"/>
<path fill="#ff8500" stroke="#3c3f41" stroke-width="0.45" d="M308.4 710.9L272.8 730.0A162.9 162.9 0 0 0 273.3 730.9L308.8 711.6A122.5 122.5 0 0 1 308.4 710.9Z"/>
<path fill="#ff8500" stroke="#3c3f41" stroke-width="0.42" d="M308.8 711.6L273.3 730.9A162.9 162.9 0 0 0 273.8 731.7L309.2 712.2A122.5 122.5 0 0 1 308.8 711.6Z"/>
<path fill="#ff8500" stroke="#3c3f41" stroke-width="0.40" d="M309.2 712.2L273.8 731.7A162.9 162.9 0 0 0 274.2 732.5L309.5 712.8A122.5 122.5 0 0 1 309.2 712.2Z"/>
<path fill="#ff8500" stroke="#3c3f41" stroke-width="0.38" d="M309.5 712.8L274.2 732.5A162.9 162.9 0 0 0 274.7 733.3L309.8 713.4A122.5 122.5 0 0 1 309.5 712.8Z"/>
<path fill="#ff8500" stroke="#3c3f41" stroke-width="0.35" d="M309.8 713.4L274.7 733.3A162.9 162.9 0 0 0 275.1 734.0L310.1 713.9A122.5 122.5 0 0 1 309.8 713.4Z"/>
<path fill="#ff8500" stroke="#3c3f41" stroke-width="0.33" d="M310.1 713.9L275.1 734.0A162.9 162.9 0 0 0 275.4 734.6L310.4 714.4A122.5 122.5 0 0 1 310.1 713.9Z"/>
<path fill="#ff8500" stroke="#3c3f41" stroke-width="0.32" d="M310.4 714.4L275.4 734.6A162.9 162.9 0 0 0 275.8 735.3L310.7 714.9A122.5 122.5 0 0 1 310.4 714.4Z"/>
<path fill="#ff8500" stroke="#3c3f41" stroke-width="0.30" d="M310.7 714.9L275.8 735.3A162.9 162.9 0 0 0 276.1 735.8L310.9 715.3A122.5 122.5 0 0 1 310.7 714.9Z"/>
<path fill="#ff8500" stroke="#3c3f41" stroke-width="0.28" d="M310.9 715.3L276.1 735.8A162.9 162.9 0 0 0 276.5 736.4L311.2 715.7A122.5 122.5 0 0 1 310.9 715.3Z"/>
<path fill="#ff8500" stroke="#3c3f41" stroke-width="0.27" d="M311.2 715.7L276.5 736.4A162.9 162.9 0 0 0 276.8 736.9L311.4 716.1A122.5 122.5 0 0 1 311.2 715.7Z"/>
<path fill="#ff8500" stroke="#3c3f41" stroke-width="0.25" d="M311.4 716.1L276.8 736.9A162.9 162.9 0 0 0 277.1 737.4L311.6 716.5A122.5 122.5 0 0 1 311.4 716.1Z"/>
<path fill="#ff8500" stroke="#3c3f41" stroke-width="0.24" d="M311.6 716.5L277.1 737.4A162.9 162.9 0 0 0 277.4 737.9L311.8 716.8A122.5 122.5 0 0 1 311.6 716.5Z"/>
<path fill="#ff8500" stroke="#3c3f41" stroke-width="0.23" d="M311.8 716.8L277.4 737.9A162.9 162.9 0 0 0 277.6 738.3L312.0 717.2A122.5 122.5 0 0 1 311.8 716.8Z"/>
<path fill="#ff8500" stroke="#3c3f41" stroke-width="0.21" d="M312.0 717.2L277.6 738.3A162.9 162.9 0 0 0 277.9 738.7L312.2 717.5A122.5 122.5 0 0 1 312.0 717.2Z"/>
<path fill="#ff8500" stroke="#3c3f41" stroke-width="0.19" d="M312.2 717.5L277.9 738.7A162.9 162.9 0 0 0 278.1 739.1L312.4 717.8A122.5 122.5 0 0 1 312.2 717.5Z"/>
<path fill="#ff8500" stroke="#3c3f41" stroke-width="0.18" d="M312.4 717.8L278.1 739.1A162.9 162.9 0 0 0 278.4 739.5L312.6 718.1A122.5 122.5 0 0 1 312.4 717.8Z"/>
<path fill="#ff8500" stroke="#3c3f41" stroke-width="0.16" d="M312.6 718.1L278.4 739.5A162.9 162.9 0 0 0 278.6 739.9L312.8 718.3A122.5 122.5 0 0 1 312.6 718.1Z"/>
<path fill="#ff8500" stroke="#3c3f41" stroke-width="0.15" d="M312.8 718.3L278.6 739.9A162.9 162.9 0 0 0 278.8 740.2L312.9 718.6A122.5 122.5 0 0 1 312.8 718.3Z"/>
<path fill="#ff8500" stroke="#3c3f41" stroke-width="0.14" d="M312.9 718.6L278.8 740.2A162.9 162.9 0 0 0 279.0 740.5L313.1 718.8A122.5 122.5 0 0 1 312.9 718.6Z"/>
<path fill="#ff8500" stroke="#3c3f41" stroke-width="0.12" d="M313.1 718.8L279.0 740.5A162.9 162.9 0 0 0 279.2 740.8L313.2 719.1A122.5 122.5 0 0 1 313.1 718.8Z"/>
<path fill="#ff8500" stroke="#3c3f41" stroke-width="0.11" d="M313.2 719.1L279.2 740.8A162.9 162.9 0 0 0 279.4 741.1L313.4 719.3A122.5 122.5 0 0 1 313.2 719.1Z"/>
<path fill="#ff8500" stroke="#3c3f41" stroke-width="0.10" d="M313.4 719.3L279.4 741.1A162.9 162.9 0 0 0 279.6 741.4L313.5 719.5A122.5 122.5 0 0 1 313.4 719.3ZM313.5 719.5L279.6 741.4A162.9 162.9 0 0 0 279.7 741.7L313.6 719.7A122.5 122.5 0 0 1 313.5 719.5Z"/>
<path fill="#ff8500" stroke="#3c3f41" stroke-width="0.09" d="M313.6 719.7L279.7 741.7A162.9 162.9 0 0 0 279.9 741.9L313.8 719.9A122.5 122.5 0 0 1 313.6 719.7Z"/>
<path fill="#ff8500" stroke="#3c3f41" stroke-width="0.08" d="M313.8 719.9L279.9 741.9A162.9 162.9 0 0 0 280.1 742.2L313.9 720.0A122.5 122.5 0 0 1 313.8 719.9ZM313.9 720.0L280.1 742.2A162.9 162.9 0 0 0 280.2 742.4L314.0 720.2A122.5 122.5 0 0 1 313.9 720.0Z"/>
<path fill="#ff8500" stroke="#3c3f41" stroke-width="0.07" d="M314.0 720.2L280.2 742.4A162.9 162.9 0 0 0 280.4 742.6L314.1 720.4A122.5 122.5 0 0 1 314.0 720.2Z"/>
<path fill="#ff8500" stroke="#3c3f41" stroke-width="0.06" d="M314.1 720.4L280.4 742.6A162.9 162.9 0 0 0 280.5 742.8L314.2 720.5A122.5 122.5 0 0 1 314.1 720.4ZM314.2 720.5L280.5 742.8A162.9 162.9 0 0 0 280.6 743.0L314.3 720.7A122.5 122.5 0 0 1 314.2 720.5ZM314.3 720.7L280.6 743.0A162.9 162.9 0 0 0 280.8 743.2L314.4 720.8A122.5 122.5 0 0 1 314.3 720.7Z"/>
<path fill="#ff8500" stroke="#3c3f41" stroke-width="0.05" d="M314.4 720.8L280.8 743.2A162.9 162.9 0 0 0 280.9 743.4L314.5 721.0A122.5 122.5 0 0 1 314.4 720.8ZM314.5 721.0L280.9 743.4A162.9 162.9 0 0 0 281.0 743.6L314.6 721.1A122.5 122.5 0 0 1 314.5 721.0Z"/>
<path fill="#ff8500" stroke="#3c3f41" stroke-width="0.04" d="M314.6 721.1L281.0 743.6A162.9 162.9 0 0 0 281.1 743.7L314.7 721.2A122.5 122.5 0 0 1 314.6 721.1ZM314.7 721.2L281.1 743.7A162.9 162.9 0 0 0 281.2 743.9L314.7 721.3A122.5 122.5 0 0 1 314.7 721.2ZM314.7 721.3L281.2 743.9A162.9 162.9 0 0 0 281.3 744.0L314.8 721.5A122.5 122.5 0 0 1 314.7 721.3ZM314.8 721.5L281.3 744.0A162.9 162.9 0 0 0 281.4 744.2L314.9 721.6A122.5 122.5 0 0 1 314.8 721.5Z"/>
<path fill="#ff8500" d="M314.9 721.6L281.4 744.2A162.9 162.9 0 0 0 281.5 744.3L315.0 721.7A122.5 122.5 0 0 1 314.9 721.6ZM315.0 721.7L281.5 744.3A162.9 162.9 0 0 0 281.6 744.5L315.0 721.8A122.5 122.5 0 0 1 315.0 721.7ZM315.0 721.8L281.6 744.5A162.9 162.9 0 0 0 281.7 744.6L315.1 721.9A122.5 122.5 0 0 1 315.0 721.8ZM315.1 721.9L281.7 744.6A162.9 162.9 0 0 0 281.8 744.7L315.2 722.0A122.5 122.5 0 0 1 315.1 721.9ZM315.2 722.0L281.8 744.7A162.9 162.9 0 0 0 281.9 744.8L315.2 722.1A122.5 122.5 0 0 1 315.2 722.0ZM315.2 722.1L281.9 744.8A162.9 162.9 0 0 0 281.9 745.0L315.3 722.2A122.5 122.5 0 0 1 315.2 722.1ZM315.3 722.2L281.9 745.0A162.9 162.9 0 0 0 282.0 745.1L315.3 722.2A122.5 122.5 0 0 1 315.3 722.2ZM315.3 722.2L282.0 745.1A162.9 162.9 0 0 0 282.1 745.2L315.4 722.3A122.5 122.5 0 0 1 315.3 722.2ZM315.4 722.3L282.1 745.2A162.9 162.9 0 0 0 282.2 745.3L315.5 722.4A122.5 122.5 0 0 1 315.4 722.3ZM315.5 722.4L282.2 745.3A162.9 162.9 0 0 0 282.3 745.4L315.5 722.5A122.5 122.5 0 0 1 315.5 722.4ZM315.5 722.5L282.3 745.4A162.9 162.9 0 0 0 282.3 745.5L315.6 722.6A122.5 122.5 0 0 1 315.5 722.5ZM315.6 722.6L282.3 745.5A162.9 162.9 0 0 0 282.4 745.7L315.6 722.7A122.5 122.5 0 0 1 315.6 722.6ZM315.6 722.7L282.4 745.7A162.9 162.9 0 0 0 282.5 745.8L315.7 722.8A122.5 122.5 0 0 1 315.6 722.7ZM315.7 722.8L282.5 745.8A162.9 162.9 0 0 0 282.6 745.9L315.8 722.9A122.5 122.5 0 0 1 315.7 722.8ZM315.8 722.9L282.6 745.9A162.9 162.9 0 0 0 282.7 746.0L315.8 722.9A122.5 122.5 0 0 1 315.8 722.9ZM315.8 722.9L282.7 746.0A162.9 162.9 0 0 0 282.7 746.1L315.9 723.0A122.5 122.5 0 0 1 315.8 722.9ZM315.9 723.0L282.7 746.1A162.9 162.9 0 0 0 282.8 746.2L316.0 723.1A122.5 122.5 0 0 1 315.9 723.0ZM316.0 723.1L282.8 746.2A162.9 162.9 0 0 0 282.9 746.4L316.0 723.2A122.5 122.5 0 0 1 316.0 723.1ZM316.0 723.2L282.9 746.4A162.9 162.9 0 0 0 283.0 746.5L316.1 723.3A122.5 122.5 0 0 1 316.0 723.2ZM316.1 723.3L283.0 746.5A162.9 162.9 0 0 0 283.1 746.6L316.1 723.4A122.5 122.5 0 0 1 316.1 723.3ZM316.1 723.4L283.1 746.6A162.9 162.9 0 0 0 283.2 746.7L316.2 723.5A122.5 122.5 0 0 1 316.1 723.4ZM316.2 723.5L283.2 746.7A162.9 162.9 0 0 0 283.2 746.8L316.3 723.6A122.5 122.5 0 0 1 316.2 723.5ZM316.3 723.6L283.2 746.8A162.9 162.9 0 0 0 283.3 746.9L316.3 723.6A122.5 122.5 0 0 1 316.3 723.6ZM316.3 723.6L283.3 746.9A162.9 162.9 0 0 0 283.4 747.1L316.4 723.7A122.5 122.5 0 0 1 316.3 723.6ZM316.4 723.7L283.4 747.1A162.9 162.9 0 0 0 283.5 747.2L316.4 723.8A122.5 122.5 0 0 1 316.4 723.7ZM316.4 723.8L283.5 747.2A162.9 162.9 0 0 0 283.6 747.3L316.5 723.9A122.5 122.5 0 0 1 316.4 723.8ZM316.5 723.9L283.6 747.3A162.9 162.9 0 0 0 283.6 747.4L316.6 724.0A122.5 122.5 0 0 1 316.5 723.9ZM316.6 724.0L283.6 747.4A162.9 162.9 0 0 0 283.7 747.5L316.6 724.1A122.5 122.5 0 0 1 316.6 724.0ZM316.6 724.1L283.7 747.5A162.9 162.9 0 0 0 283.8 747.6L316.7 724.2A122.5 122.5 0 0 1 316.6 724.1ZM316.7 724.2L283.8 747.6A162.9 162.9 0 0 0 283.9 747.8L316.8 724.3A122.5 122.5 0 0 1 316.7 724.2ZM316.8 724.3L283.9 747.8A162.9 162.9 0 0 0 284.0 747.9L316.8 724.3A122.5 122.5 0 0 1 316.8 724.3ZM316.8 724.3L283.9 747.8A162.9 162.9 0 0 0 290.0 755.7L321.3 730.3A122.5 122.5 0 0 1 316.8 724.3ZM321.3 730.3L290.0 755.7A162.9 162.9 0 0 0 294.6 761.2L324.8 734.3A122.5 122.5 0 0 1 321.3 730.3Z"/>
<path fill="#c06a10" d="M321.3 730.2L289.9 755.6A162.9 162.9 0 0 0 290.1 755.8L321.4 730.3A122.5 122.5 0 0 1 321.3 730.2Z"/>
<path fill="#b34000" stroke="#3c3f41" stroke-width="1.35" d="M255.8 680.4L219.0 686.7A200.3 200.3 0 0 0 219.9 691.9L256.6 684.6A162.9 162.9 0 0 1 255.8 680.4Z"/>
<path fill="#688868" d="M256.6 684.6L219.9 691.9A200.3 200.3 0 0 0 220.1 692.9L256.8 685.5A162.9 162.9 0 0 1 256.6 684.6Z"/>
<path fill="#b34000" stroke="#3c3f41" stroke-width="1.35" d="M256.8 685.8L220.2 693.3A200.3 200.3 0 0 0 220.9 696.7L257.4 688.5A162.9 162.9 0 0 1 256.8 685.8Z"/>
<path fill="#688868" d="M257.4 688.5L220.9 696.7A200.3 200.3 0 0 0 221.2 698.1L257.7 689.6A162.9 162.9 0 0 1 257.4 688.5Z"/>
<path fill="#ff7200" d="M257.7 689.6L221.2 698.1A200.3 200.3 0 0 0 221.5 699.2L257.9 690.6A162.9 162.9 0 0 1 257.7 689.6Z"/>
<path fill="#688868" d="M257.9 690.6L221.5 699.2A200.3 200.3 0 0 0 221.6 699.8L258.0 691.1A162.9 162.9 0 0 1 257.9 690.6Z"/>
<path fill="#ff7200" stroke="#3c3f41" stroke-width="0.60" d="M258.0 691.1L221.6 699.8A200.3 200.3 0 0 0 221.8 700.3L258.1 691.5A162.9 162.9 0 0 1 258.0 691.1ZM258.1 691.5L221.8 700.3A200.3 200.3 0 0 0 222.1 701.7L258.4 692.6A162.9 162.9 0 0 1 258.1 691.5Z"/>
<path fill="#b34000" stroke="#3c3f41" stroke-width="0.60" d="M258.4 692.6L222.1 701.7A200.3 200.3 0 0 0 222.5 703.1L258.7 693.8A162.9 162.9 0 0 1 258.4 692.6Z"/>
<path fill="#688868" d="M258.7 693.8L222.5 703.1A200.3 200.3 0 0 0 222.7 704.0L258.9 694.5A162.9 162.9 0 0 1 258.7 693.8Z"/>
<path fill="#ff7200" d="M258.9 694.5L222.7 704.0A200.3 200.3 0 0 0 223.2 705.8L259.3 695.9A162.9 162.9 0 0 1 258.9 694.5Z"/>
<path fill="#7b7b7b" d="M259.3 695.9L223.2 705.8A200.3 200.3 0 0 0 223.3 706.3L259.4 696.3A162.9 162.9 0 0 1 259.3 695.9Z"/>
<path fill="#ff7200" d="M259.4 696.3L223.3 706.3A200.3 200.3 0 0 0 223.5 707.0L259.5 696.9A162.9 162.9 0 0 1 259.4 696.3ZM259.5 696.9L223.5 707.0A200.3 200.3 0 0 0 224.2 709.3L260.1 698.8A162.9 162.9 0 0 1 259.5 696.9ZM260.1 698.8L224.2 709.3A200.3 200.3 0 0 0 224.7 711.1L260.5 700.3A162.9 162.9 0 0 1 260.1 698.8Z"/>
<path fill="#ff7200" stroke="#3c3f41" stroke-width="0.60" d="M260.5 700.3L224.7 711.1A200.3 200.3 0 0 0 224.9 711.7L260.7 700.7A162.9 162.9 0 0 1 260.5 700.3Z"/>
<path fill="#ff7200" d="M260.7 700.7L224.9 711.7A200.3 200.3 0 0 0 225.5 713.6L261.1 702.3A162.9 162.9 0 0 1 260.7 700.7ZM261.1 702.3L225.5 713.6A200.3 200.3 0 0 0 226.1 715.4L261.6 703.7A162.9 162.9 0 0 1 261.1 702.3Z"/>
<path fill="#688868" stroke="#3c3f41" stroke-width="0.60" d="M261.6 703.7L226.1 715.4A200.3 200.3 0 0 0 226.8 717.5L262.2 705.5A162.9 162.9 0 0 1 261.6 703.7Z"/>
<path fill="#688868" d="M262.2 705.5L226.8 717.5A200.3 200.3 0 0 0 227.4 719.2L262.7 706.9A162.9 162.9 0 0 1 262.2 705.5Z"/>
<path fill="#ff7200" d="M262.7 706.9L227.4 719.2A200.3 200.3 0 0 0 228.1 721.3L263.3 708.5A162.9 162.9 0 0 1 262.7 706.9ZM263.3 708.5L228.1 721.3A200.3 200.3 0 0 0 228.3 721.9L263.4 709.1A162.9 162.9 0 0 1 263.3 708.5Z"/>
<path fill="#ff7200" stroke="#3c3f41" stroke-width="0.60" d="M263.4 709.1L228.3 721.9A200.3 200.3 0 0 0 228.6 722.7L263.7 709.6A162.9 162.9 0 0 1 263.4 709.1Z"/>
<path fill="#b34000" d="M263.7 709.6L228.6 722.7A200.3 200.3 0 0 0 229.3 724.5L264.2 711.2A162.9 162.9 0 0 1 263.7 709.6Z"/>
<path fill="#ff7200" d="M264.2 711.2L229.3 724.5A200.3 200.3 0 0 0 230.2 726.9L265.0 713.1A162.9 162.9 0 0 1 264.2 711.2Z"/>
<path fill="#688868" d="M265.0 713.1L230.2 726.9A200.3 200.3 0 0 0 230.9 728.6L265.5 714.5A162.9 162.9 0 0 1 265.0 713.1Z"/>
<path fill="#ff8500" d="M265.5 714.5L230.9 728.6A200.3 200.3 0 0 0 231.8 730.8L266.3 716.3A162.9 162.9 0 0 1 265.5 714.5Z"/>
<path fill="#ff7200" d="M266.3 716.3L231.8 730.8A200.3 200.3 0 0 0 232.6 732.6L266.9 717.8A162.9 162.9 0 0 1 266.3 716.3Z"/>
<path fill="#ff8500" d="M266.9 717.8L232.6 732.6A200.3 200.3 0 0 0 233.4 734.4L267.6 719.2A162.9 162.9 0 0 1 266.9 717.8Z"/>
<path fill="#ff7200" d="M267.6 719.2L233.4 734.4A200.3 200.3 0 0 0 233.8 735.4L267.9 720.0A162.9 162.9 0 0 1 267.6 719.2Z"/>
<path fill="#ff7200" stroke="#3c3f41" stroke-width="0.60" d="M267.9 720.0L233.8 735.4A200.3 200.3 0 0 0 234.0 735.9L268.1 720.4A162.9 162.9 0 0 1 267.9 720.0Z"/>
<path fill="#ff7200" d="M268.1 720.4L234.0 735.9A200.3 200.3 0 0 0 234.3 736.5L268.3 720.9A162.9 162.9 0 0 1 268.1 720.4ZM268.3 720.9L234.3 736.5A200.3 200.3 0 0 0 234.6 737.2L268.6 721.4A162.9 162.9 0 0 1 268.3 720.9ZM268.6 721.4L234.6 737.2A200.3 200.3 0 0 0 235.7 739.4L269.4 723.3A162.9 162.9 0 0 1 268.6 721.4Z"/>
<path fill="#ff8500" d="M269.4 723.3L235.7 739.4A200.3 200.3 0 0 0 236.4 741.0L270.0 724.5A162.9 162.9 0 0 1 269.4 723.3Z"/>
<path fill="#ff7200" d="M270.0 724.5L236.4 741.0A200.3 200.3 0 0 0 237.5 743.2L270.9 726.3A162.9 162.9 0 0 1 270.0 724.5Z"/>
<path fill="#ff8500" d="M270.9 726.3L237.5 743.2A200.3 200.3 0 0 0 238.1 744.3L271.4 727.3A162.9 162.9 0 0 1 270.9 726.3Z"/>
<path fill="#ff7200" stroke="#3c3f41" stroke-width="0.60" d="M271.4 727.3L238.1 744.3A200.3 200.3 0 0 0 238.5 745.0L271.7 727.8A162.9 162.9 0 0 1 271.4 727.3Z"/>
<path fill="#ff7200" d="M271.7 727.8L238.5 745.0A200.3 200.3 0 0 0 238.9 745.9L272.1 728.5A162.9 162.9 0 0 1 271.7 727.8ZM272.1 728.5L238.9 745.9A200.3 200.3 0 0 0 239.4 746.8L272.5 729.3A162.9 162.9 0 0 1 272.1 728.5Z"/>
<path fill="#688868" d="M272.5 729.3L239.4 746.8A200.3 200.3 0 0 0 240.0 747.9L273.0 730.2A162.9 162.9 0 0 1 272.5 729.3ZM273.0 730.2L240.0 747.9A200.3 200.3 0 0 0 241.0 749.7L273.8 731.7A162.9 162.9 0 0 1 273.0 730.2Z"/>
<path fill="#ff7200" d="M273.8 731.7L241.0 749.7A200.3 200.3 0 0 0 242.0 751.5L274.6 733.1A162.9 162.9 0 0 1 273.8 731.7Z"/>
<path fill="#ff8500" d="M274.6 733.1L242.0 751.5A200.3 200.3 0 0 0 243.1 753.5L275.5 734.7A162.9 162.9 0 0 1 274.6 733.1Z"/>
<path fill="#ff7200" stroke="#3c3f41" stroke-width="0.60" d="M275.5 734.7L243.1 753.5A200.3 200.3 0 0 0 243.8 754.7L276.0 735.7A162.9 162.9 0 0 1 275.5 734.7ZM276.0 735.7L243.8 754.7A200.3 200.3 0 0 0 244.8 756.3L276.8 737.0A162.9 162.9 0 0 1 276.0 735.7Z"/>
<path fill="#ff7200" d="M276.8 737.0L244.8 756.3A200.3 200.3 0 0 0 245.3 757.1L277.2 737.7A162.9 162.9 0 0 1 276.8 737.0Z"/>
<path fill="#ff7200" stroke="#3c3f41" stroke-width="0.60" d="M277.2 737.7L245.3 757.1A200.3 200.3 0 0 0 245.6 757.6L277.5 738.0A162.9 162.9 0 0 1 277.2 737.7ZM277.5 738.0L245.6 757.6A200.3 200.3 0 0 0 245.9 758.1L277.7 738.5A162.9 162.9 0 0 1 277.5 738.0Z"/>
<path fill="#688868" stroke="#3c3f41" stroke-width="0.60" d="M277.7 738.5L245.9 758.1A200.3 200.3 0 0 0 247.2 760.2L278.8 740.2A162.9 162.9 0 0 1 277.7 738.5Z"/>
<path fill="#ff7200" d="M278.8 740.2L247.2 760.2A200.3 200.3 0 0 0 247.8 761.1L279.3 740.9A162.9 162.9 0 0 1 278.8 740.2Z"/>
<path fill="#7b7b7b" d="M279.3 740.9L247.8 761.1A200.3 200.3 0 0 0 248.2 761.7L279.6 741.4A162.9 162.9 0 0 1 279.3 740.9Z"/>
<path fill="#ff7200" stroke="#3c3f41" stroke-width="0.60" d="M279.6 741.4L248.2 761.7A200.3 200.3 0 0 0 249.0 763.0L280.3 742.4A162.9 162.9 0 0 1 279.6 741.4Z"/>
<path fill="#ff7200" d="M280.3 742.4L249.0 763.0A200.3 200.3 0 0 0 249.4 763.5L280.5 742.9A162.9 162.9 0 0 1 280.3 742.4Z"/>
<path fill="#ff7200" stroke="#3c3f41" stroke-width="0.60" d="M280.5 742.9L249.4 763.5A200.3 200.3 0 0 0 250.7 765.5L281.6 744.5A162.9 162.9 0 0 1 280.5 742.9Z"/>
<path fill="#688868" stroke="#3c3f41" stroke-width="0.60" d="M281.6 744.5L250.7 765.5A200.3 200.3 0 0 0 252.2 767.7L282.9 746.3A162.9 162.9 0 0 1 281.6 744.5Z"/>
<path fill="#ff7200" d="M282.9 746.3L252.2 767.7A200.3 200.3 0 0 0 253.2 769.1L283.7 747.4A162.9 162.9 0 0 1 282.9 746.3Z"/>
<path fill="#7b7b7b" d="M283.7 747.4L253.2 769.1A200.3 200.3 0 0 0 254.8 771.3L285.0 749.2A162.9 162.9 0 0 1 283.7 747.4Z"/>
<path fill="#ff7200" stroke="#3c3f41" stroke-width="0.60" d="M285.0 749.2L254.8 771.3A200.3 200.3 0 0 0 255.4 772.2L285.5 749.9A162.9 162.9 0 0 1 285.0 749.2Z"/>
<path fill="#688868" d="M285.5 749.9L255.4 772.2A200.3 200.3 0 0 0 256.8 774.0L286.6 751.4A162.9 162.9 0 0 1 285.5 749.9Z"/>
<path fill="#ff7200" d="M286.6 751.4L256.8 774.0A200.3 200.3 0 0 0 257.5 774.9L287.2 752.2A162.9 162.9 0 0 1 286.6 751.4Z"/>
<path fill="#7b7b7b" d="M287.2 752.2L257.5 774.9A200.3 200.3 0 0 0 259.2 777.1L288.5 753.9A162.9 162.9 0 0 1 287.2 752.2Z"/>
<path fill="#b34000" stroke="#3c3f41" stroke-width="0.60" d="M288.5 753.9L259.2 777.1A200.3 200.3 0 0 0 260.7 779.0L289.7 755.5A162.9 162.9 0 0 1 288.5 753.9Z"/>
<path fill="#ff7200" stroke="#3c3f41" stroke-width="0.60" d="M289.7 755.5L260.7 779.0A200.3 200.3 0 0 0 261.7 780.3L290.6 756.5A162.9 162.9 0 0 1 289.7 755.5Z"/>
<path fill="#ff7200" d="M290.6 756.5L261.7 780.3A200.3 200.3 0 0 0 262.0 780.6L290.8 756.8A162.9 162.9 0 0 1 290.6 756.5Z"/>
<path fill="#ff8500" d="M290.8 756.8L262.0 780.6A200.3 200.3 0 0 0 263.3 782.2L291.9 758.1A162.9 162.9 0 0 1 290.8 756.8ZM291.9 758.1L263.3 782.2A200.3 200.3 0 0 0 265.1 784.2L293.3 759.7A162.9 162.9 0 0 1 291.9 758.1Z"/>
<path fill="#ff7200" stroke="#3c3f41" stroke-width="0.60" d="M293.3 759.7L265.1 784.2A200.3 200.3 0 0 0 265.9 785.2L294.0 760.5A162.9 162.9 0 0 1 293.3 759.7Z"/>
<path fill="#ff7200" d="M294.0 760.5L265.9 785.2A200.3 200.3 0 0 0 266.5 785.9L294.5 761.0A162.9 162.9 0 0 1 294.0 760.5Z"/>
<path fill="#7b7b7b" d="M294.5 761.0L266.5 785.9A200.3 200.3 0 0 0 266.6 786.0L294.6 761.2A162.9 162.9 0 0 1 294.5 761.0Z"/>
<path fill="#688868" stroke="#3c3f41" stroke-width="1.35" d="M218.7 685.4L185.6 690.8A233.9 233.9 0 0 0 186.5 696.0L219.5 689.8A200.3 200.3 0 0 1 218.7 685.4ZM219.7 690.9L186.7 697.2A233.9 233.9 0 0 0 187.5 701.2L220.4 694.3A200.3 200.3 0 0 1 219.7 690.9Z"/>
<path fill="#ff8500" stroke="#3c3f41" stroke-width="1.35" d="M220.6 695.3L187.8 702.4A233.9 233.9 0 0 0 189.0 707.6L221.6 699.8A200.3 200.3 0 0 1 220.6 695.3Z"/>
<path fill="#7b7b7b" d="M221.7 700.1L189.1 708.0A233.9 233.9 0 0 0 189.7 710.8L222.3 702.5A200.3 200.3 0 0 1 221.7 700.1Z"/>
<path fill="#b34000" stroke="#3c3f41" stroke-width="0.60" d="M222.3 702.5L189.7 710.8A233.9 233.9 0 0 0 190.5 713.5L222.9 704.8A200.3 200.3 0 0 1 222.3 702.5Z"/>
<path fill="#7b7b7b" d="M222.9 704.8L190.5 713.5A233.9 233.9 0 0 0 191.2 716.3L223.6 707.2A200.3 200.3 0 0 1 222.9 704.8Z"/>
<path fill="#ff8500" stroke="#3c3f41" stroke-width="0.60" d="M223.6 707.2L191.2 716.3A233.9 233.9 0 0 0 192.1 719.3L224.3 709.8A200.3 200.3 0 0 1 223.6 707.2Z"/>
<path fill="#ff8500" d="M224.3 709.8L192.1 719.3A233.9 233.9 0 0 0 193.1 722.5L225.2 712.5A200.3 200.3 0 0 1 224.3 709.8ZM225.2 712.5L193.1 722.5A233.9 233.9 0 0 0 194.3 726.3L226.2 715.8A200.3 200.3 0 0 1 225.2 712.5Z"/>
<path fill="#b34000" stroke="#3c3f41" stroke-width="0.60" d="M226.2 715.8L194.3 726.3A233.9 233.9 0 0 0 195.5 730.0L227.3 718.9A200.3 200.3 0 0 1 226.2 715.8Z"/>
<path fill="#ff8500" d="M227.3 718.9L195.5 730.0A233.9 233.9 0 0 0 195.8 730.9L227.5 719.7A200.3 200.3 0 0 1 227.3 718.9ZM227.5 719.7L195.8 730.9A233.9 233.9 0 0 0 197.0 734.1L228.5 722.4A200.3 200.3 0 0 1 227.5 719.7Z"/>
<path fill="#ff7200" d="M228.5 722.4L197.0 734.1A233.9 233.9 0 0 0 198.4 737.8L229.7 725.6A200.3 200.3 0 0 1 228.5 722.4Z"/>
<path fill="#ff8500" stroke="#3c3f41" stroke-width="0.60" d="M229.7 725.6L198.4 737.8A233.9 233.9 0 0 0 199.3 740.1L230.5 727.6A200.3 200.3 0 0 1 229.7 725.6Z"/>
<path fill="#ff7200" d="M230.5 727.6L199.3 740.1A233.9 233.9 0 0 0 200.8 743.8L231.8 730.7A200.3 200.3 0 0 1 230.5 727.6Z"/>
<path fill="#ff8500" d="M231.8 730.7L200.8 743.8A233.9 233.9 0 0 0 202.4 747.3L233.1 733.8A200.3 200.3 0 0 1 231.8 730.7ZM233.1 733.8L202.4 747.3A233.9 233.9 0 0 0 203.8 750.5L234.3 736.5A200.3 200.3 0 0 1 233.1 733.8ZM234.3 736.5L203.8 750.5A233.9 233.9 0 0 0 204.4 751.9L234.9 737.7A200.3 200.3 0 0 1 234.3 736.5Z"/>
<path fill="#ff8500" stroke="#3c3f41" stroke-width="0.60" d="M234.9 737.7L204.4 751.9A233.9 233.9 0 0 0 205.0 753.2L235.4 738.8A200.3 200.3 0 0 1 234.9 737.7Z"/>
<path fill="#ff8500" d="M235.4 738.8L205.0 753.2A233.9 233.9 0 0 0 206.7 756.5L236.8 741.7A200.3 200.3 0 0 1 235.4 738.8Z"/>
<path fill="#7b7b7b" d="M236.8 741.7L206.7 756.5A233.9 233.9 0 0 0 207.8 758.9L237.8 743.7A200.3 200.3 0 0 1 236.8 741.7Z"/>
<path fill="#ff8500" d="M237.8 743.7L207.8 758.9A233.9 233.9 0 0 0 209.6 762.2L239.3 746.5A200.3 200.3 0 0 1 237.8 743.7ZM239.3 746.5L209.6 762.2A233.9 233.9 0 0 0 210.7 764.3L240.2 748.3A200.3 200.3 0 0 1 239.3 746.5ZM240.2 748.3L210.7 764.3A233.9 233.9 0 0 0 211.2 765.3L240.7 749.2A200.3 200.3 0 0 1 240.2 748.3ZM240.7 749.2L211.2 765.3A233.9 233.9 0 0 0 211.8 766.3L241.2 750.0A200.3 200.3 0 0 1 240.7 749.2ZM241.2 750.0L211.8 766.3A233.9 233.9 0 0 0 213.0 768.5L242.2 751.9A200.3 200.3 0 0 1 241.2 750.0Z"/>
<path fill="#b34000" stroke="#3c3f41" stroke-width="0.60" d="M242.2 751.9L213.0 768.5A233.9 233.9 0 0 0 214.2 770.6L243.3 753.7A200.3 200.3 0 0 1 242.2 751.9Z"/>
<path fill="#ff8500" d="M243.3 753.7L214.2 770.6A233.9 233.9 0 0 0 215.5 772.8L244.4 755.6A200.3 200.3 0 0 1 243.3 753.7ZM244.4 755.6L215.5 772.8A233.9 233.9 0 0 0 217.2 775.6L245.8 758.0A200.3 200.3 0 0 1 244.4 755.6Z"/>
<path fill="#7b7b7b" d="M245.8 758.0L217.2 775.6A233.9 233.9 0 0 0 218.9 778.3L247.3 760.3A200.3 200.3 0 0 1 245.8 758.0Z"/>
<path fill="#ff8500" d="M247.3 760.3L218.9 778.3A233.9 233.9 0 0 0 220.3 780.6L248.5 762.2A200.3 200.3 0 0 1 247.3 760.3ZM248.5 762.2L220.3 780.6A233.9 233.9 0 0 0 222.0 783.0L249.9 764.4A200.3 200.3 0 0 1 248.5 762.2Z"/>
<path fill="#7b7b7b" d="M249.9 764.4L222.0 783.0A233.9 233.9 0 0 0 223.2 784.9L251.0 765.9A200.3 200.3 0 0 1 249.9 764.4ZM251.0 765.9L223.2 784.9A233.9 233.9 0 0 0 225.3 787.9L252.7 768.5A200.3 200.3 0 0 1 251.0 765.9ZM252.7 768.5L225.3 787.9A233.9 233.9 0 0 0 226.7 789.9L254.0 770.2A200.3 200.3 0 0 1 252.7 768.5Z"/>
<path fill="#ff8500" d="M254.0 770.2L226.7 789.9A233.9 233.9 0 0 0 227.3 790.7L254.5 770.9A200.3 200.3 0 0 1 254.0 770.2Z"/>
<path fill="#ff8500" stroke="#3c3f41" stroke-width="0.60" d="M254.5 770.9L227.3 790.7A233.9 233.9 0 0 0 227.8 791.3L254.9 771.4A200.3 200.3 0 0 1 254.5 770.9Z"/>
<path fill="#b34000" d="M254.9 771.4L227.8 791.3A233.9 233.9 0 0 0 229.5 793.6L256.3 773.4A200.3 200.3 0 0 1 254.9 771.4ZM256.3 773.4L229.5 793.6A233.9 233.9 0 0 0 230.1 794.5L256.9 774.1A200.3 200.3 0 0 1 256.3 773.4Z"/>
<path fill="#7b7b7b" d="M256.9 774.1L230.1 794.5A233.9 233.9 0 0 0 230.7 795.3L257.4 774.8A200.3 200.3 0 0 1 256.9 774.1Z"/>
<path fill="#688868" d="M257.4 774.8L230.7 795.3A233.9 233.9 0 0 0 231.5 796.3L258.1 775.7A200.3 200.3 0 0 1 257.4 774.8ZM258.1 775.7L231.5 796.3A233.9 233.9 0 0 0 232.9 798.0L259.3 777.2A200.3 200.3 0 0 1 258.1 775.7Z"/>
<path fill="#ff8500" d="M259.3 777.2L232.9 798.0A233.9 233.9 0 0 0 233.6 798.9L259.8 777.9A200.3 200.3 0 0 1 259.3 777.2ZM259.8 777.9L233.6 798.9A233.9 233.9 0 0 0 234.6 800.2L260.7 779.1A200.3 200.3 0 0 1 259.8 777.9ZM260.7 779.1L234.6 800.2A233.9 233.9 0 0 0 236.6 802.6L262.4 781.1A200.3 200.3 0 0 1 260.7 779.1ZM262.4 781.1L236.6 802.6A233.9 233.9 0 0 0 237.9 804.2L263.6 782.5A200.3 200.3 0 0 1 262.4 781.1Z"/>
<path fill="#ff8500" stroke="#3c3f41" stroke-width="0.60" d="M263.6 782.5L237.9 804.2A233.9 233.9 0 0 0 239.7 806.2L265.1 784.2A200.3 200.3 0 0 1 263.6 782.5Z"/>
<path fill="#b34000" d="M265.1 784.2L239.7 806.2A233.9 233.9 0 0 0 241.5 808.3L266.6 786.0A200.3 200.3 0 0 1 265.1 784.2ZM189.3 709.1L160.9 716.1A263.2 263.2 0 0 0 162.4 722.0L190.7 714.3A233.9 233.9 0 0 1 189.3 709.1Z"/>
<path fill="#ff7200" stroke="#3c3f41" stroke-width="1.35" d="M190.7 714.3L162.4 722.0A263.2 263.2 0 0 0 167.5 738.7L195.2 729.2A233.9 233.9 0 0 1 190.7 714.3Z"/>
<path fill="#ff7200" stroke="#3c3f41" stroke-width="0.60" d="M195.2 729.2L167.5 738.7A263.2 263.2 0 0 0 167.9 739.7L195.5 730.0A233.9 233.9 0 0 1 195.2 729.2ZM195.5 730.0L167.9 739.7A263.2 263.2 0 0 0 169.2 743.5L196.8 733.4A233.9 233.9 0 0 1 195.5 730.0Z"/>
<path fill="#7b7b7b" d="M196.8 733.4L169.2 743.5A263.2 263.2 0 0 0 170.1 745.8L197.5 735.4A233.9 233.9 0 0 1 196.8 733.4Z"/>
<path fill="#ff7200" d="M197.5 735.4L170.1 745.8A263.2 263.2 0 0 0 170.7 747.4L198.1 736.9A233.9 233.9 0 0 1 197.5 735.4Z"/>
<path fill="#ff8500" stroke="#3c3f41" stroke-width="0.60" d="M198.1 736.9L170.7 747.4A263.2 263.2 0 0 0 171.8 750.3L199.1 739.5A233.9 233.9 0 0 1 198.1 736.9Z"/>
<path fill="#ff8500" d="M199.1 739.5L171.8 750.3A263.2 263.2 0 0 0 172.1 751.0L199.3 740.1A233.9 233.9 0 0 1 199.1 739.5Z"/>
<path fill="#7b7b7b" d="M199.3 740.1L172.1 751.0A263.2 263.2 0 0 0 172.5 751.9L199.6 740.8A233.9 233.9 0 0 1 199.3 740.1Z"/>
<path fill="#ff7200" d="M199.6 740.8L172.5 751.9A263.2 263.2 0 0 0 174.1 755.7L201.0 744.3A233.9 233.9 0 0 1 199.6 740.8Z"/>
<path fill="#7b7b7b" d="M201.0 744.3L174.1 755.7A263.2 263.2 0 0 0 174.4 756.5L201.3 745.0A233.9 233.9 0 0 1 201.0 744.3Z"/>
<path fill="#ff8500" d="M201.3 745.0L174.4 756.5A263.2 263.2 0 0 0 175.2 758.4L202.1 746.7A233.9 233.9 0 0 1 201.3 745.0Z"/>
<path fill="#ff7200" d="M202.1 746.7L175.2 758.4A263.2 263.2 0 0 0 175.9 760.0L202.7 748.1A233.9 233.9 0 0 1 202.1 746.7Z"/>
<path fill="#ff7200" stroke="#3c3f41" stroke-width="0.60" d="M202.7 748.1L175.9 760.0A263.2 263.2 0 0 0 176.6 761.5L203.3 749.4A233.9 233.9 0 0 1 202.7 748.1Z"/>
<path fill="#ff7200" d="M203.3 749.4L176.6 761.5A263.2 263.2 0 0 0 176.9 762.2L203.6 750.0A233.9 233.9 0 0 1 203.3 749.4Z"/>
<path fill="#b34000" d="M203.6 750.0L176.9 762.2A263.2 263.2 0 0 0 177.7 763.9L204.3 751.6A233.9 233.9 0 0 1 203.6 750.0Z"/>
<path fill="#ff7200" d="M204.3 751.6L177.7 763.9A263.2 263.2 0 0 0 178.9 766.5L205.4 753.8A233.9 233.9 0 0 1 204.3 751.6Z"/>
<path fill="#ff7200" stroke="#3c3f41" stroke-width="0.60" d="M205.4 753.8L178.9 766.5A263.2 263.2 0 0 0 179.2 767.0L205.6 754.3A233.9 233.9 0 0 1 205.4 753.8Z"/>
<path fill="#ff8500" stroke="#3c3f41" stroke-width="0.60" d="M205.6 754.3L179.2 767.0A263.2 263.2 0 0 0 180.9 770.5L207.1 757.4A233.9 233.9 0 0 1 205.6 754.3Z"/>
<path fill="#7b7b7b" stroke="#3c3f41" stroke-width="0.60" d="M207.1 757.4L180.9 770.5A263.2 263.2 0 0 0 182.1 772.9L208.2 759.5A233.9 233.9 0 0 1 207.1 757.4Z"/>
<path fill="#ff7200" d="M208.2 759.5L182.1 772.9A263.2 263.2 0 0 0 184.1 776.7L209.9 762.9A233.9 233.9 0 0 1 208.2 759.5ZM209.9 762.9L184.1 776.7A263.2 263.2 0 0 0 186.1 780.4L211.7 766.3A233.9 233.9 0 0 1 209.9 762.9Z"/>
<path fill="#688868" d="M211.7 766.3L186.1 780.4A263.2 263.2 0 0 0 187.9 783.6L213.3 769.1A233.9 233.9 0 0 1 211.7 766.3Z"/>
<path fill="#ff8500" d="M213.3 769.1L187.9 783.6A263.2 263.2 0 0 0 190.1 787.3L215.3 772.4A233.9 233.9 0 0 1 213.3 769.1Z"/>
<path fill="#ff7200" stroke="#3c3f41" stroke-width="0.60" d="M215.3 772.4L190.1 787.3A263.2 263.2 0 0 0 191.3 789.4L216.3 774.2A233.9 233.9 0 0 1 215.3 772.4Z"/>
<path fill="#ff7200" d="M216.3 774.2L191.3 789.4A263.2 263.2 0 0 0 191.9 790.3L216.9 775.0A233.9 233.9 0 0 1 216.3 774.2Z"/>
<path fill="#ff7200" stroke="#3c3f41" stroke-width="0.60" d="M216.9 775.0L191.9 790.3A263.2 263.2 0 0 0 192.8 791.8L217.7 776.3A233.9 233.9 0 0 1 216.9 775.0Z"/>
<path fill="#7b7b7b" d="M217.7 776.3L192.8 791.8A263.2 263.2 0 0 0 195.1 795.5L219.7 779.6A233.9 233.9 0 0 1 217.7 776.3Z"/>
<path fill="#ff7200" d="M219.7 779.6L195.1 795.5A263.2 263.2 0 0 0 196.1 797.0L220.6 781.0A233.9 233.9 0 0 1 219.7 779.6ZM220.6 781.0L196.1 797.0A263.2 263.2 0 0 0 197.5 799.2L221.9 782.9A233.9 233.9 0 0 1 220.6 781.0Z"/>
<path fill="#688868" d="M221.9 782.9L197.5 799.2A263.2 263.2 0 0 0 198.5 800.6L222.7 784.2A233.9 233.9 0 0 1 221.9 782.9Z"/>
<path fill="#ff7200" d="M222.7 784.2L198.5 800.6A263.2 263.2 0 0 0 200.2 803.1L224.3 786.4A233.9 233.9 0 0 1 222.7 784.2Z"/>
<path fill="#ff7200" stroke="#3c3f41" stroke-width="0.60" d="M224.3 786.4L200.2 803.1A263.2 263.2 0 0 0 201.3 804.7L225.3 787.8A233.9 233.9 0 0 1 224.3 786.4Z"/>
<path fill="#ff7200" d="M225.3 787.8L201.3 804.7A263.2 263.2 0 0 0 202.6 806.5L226.4 789.4A233.9 233.9 0 0 1 225.3 787.8Z"/>
<path fill="#ff7200" stroke="#3c3f41" stroke-width="0.60" d="M226.4 789.4L202.6 806.5A263.2 263.2 0 0 0 203.5 807.7L227.2 790.5A233.9 233.9 0 0 1 226.4 789.4Z"/>
<path fill="#ff7200" d="M227.2 790.5L203.5 807.7A263.2 263.2 0 0 0 204.5 809.1L228.1 791.7A233.9 233.9 0 0 1 227.2 790.5ZM228.1 791.7L204.5 809.1A263.2 263.2 0 0 0 204.9 809.7L228.5 792.3A233.9 233.9 0 0 1 228.1 791.7Z"/>
<path fill="#ff8500" d="M228.5 792.3L204.9 809.7A263.2 263.2 0 0 0 205.9 811.0L229.3 793.4A233.9 233.9 0 0 1 228.5 792.3ZM229.3 793.4L205.9 811.0A263.2 263.2 0 0 0 206.2 811.4L229.6 793.8A233.9 233.9 0 0 1 229.3 793.4Z"/>
<path fill="#ff7200" stroke="#3c3f41" stroke-width="1.35" d="M229.6 793.8L206.2 811.4A263.2 263.2 0 0 0 219.6 827.7L241.5 808.3A233.9 233.9 0 0 1 229.6 793.8Z"/>
<path fill="#ff8500" d="M160.8 715.6L136.1 721.6A288.6 288.6 0 0 0 137.2 726.0L161.8 719.6A263.2 263.2 0 0 1 160.8 715.6Z"/>
<path fill="#688868" d="M161.8 719.8L137.2 726.2A288.6 288.6 0 0 0 137.7 727.9L162.2 721.3A263.2 263.2 0 0 1 161.8 719.8Z"/>
<path fill="#ff8500" stroke="#3c3f41" stroke-width="1.35" d="M162.2 721.3L137.7 727.9A288.6 288.6 0 0 0 144.5 749.8L168.5 741.3A263.2 263.2 0 0 1 162.2 721.3Z"/>
<path fill="#d86000" stroke="#3c3f41" stroke-width="1.35" d="M168.5 741.5L144.6 750.0A288.6 288.6 0 0 0 146.1 754.1L169.9 745.2A263.2 263.2 0 0 1 168.5 741.5Z"/>
<path fill="#ff8500" d="M170.0 745.6L146.3 754.5A288.6 288.6 0 0 0 147.7 758.3L171.3 749.0A263.2 263.2 0 0 1 170.0 745.6ZM171.5 749.5L147.9 758.8A288.6 288.6 0 0 0 149.4 762.5L172.9 752.9A263.2 263.2 0 0 1 171.5 749.5Z"/>
<path fill="#b34000" d="M173.1 753.3L149.6 763.0A288.6 288.6 0 0 0 151.1 766.7L174.5 756.7A263.2 263.2 0 0 1 173.1 753.3Z"/>
<path fill="#7b7b7b" d="M174.7 757.1L151.3 767.2A288.6 288.6 0 0 0 153.2 771.3L176.3 760.9A263.2 263.2 0 0 1 174.7 757.1Z"/>
<path fill="#ff8500" d="M176.3 760.9L153.2 771.3A288.6 288.6 0 0 0 155.4 776.2L178.4 765.4A263.2 263.2 0 0 1 176.3 760.9ZM178.4 765.4L155.4 776.2A288.6 288.6 0 0 0 158.0 781.6L180.8 770.2A263.2 263.2 0 0 1 178.4 765.4ZM180.8 770.2L158.0 781.6A288.6 288.6 0 0 0 159.9 785.2L182.4 773.6A263.2 263.2 0 0 1 180.8 770.2Z"/>
<path fill="#ff7200" d="M182.4 773.6L159.9 785.2A288.6 288.6 0 0 0 162.4 790.0L184.8 778.0A263.2 263.2 0 0 1 182.4 773.6Z"/>
<path fill="#ff8500" d="M184.8 778.0L162.4 790.0A288.6 288.6 0 0 0 164.8 794.4L187.0 782.0A263.2 263.2 0 0 1 184.8 778.0Z"/>
<path fill="#b34000" d="M187.0 782.0L164.8 794.4A288.6 288.6 0 0 0 166.5 797.4L188.5 784.7A263.2 263.2 0 0 1 187.0 782.0Z"/>
<path fill="#ff7200" d="M188.5 784.7L166.5 797.4A288.6 288.6 0 0 0 169.1 801.7L190.9 788.7A263.2 263.2 0 0 1 188.5 784.7Z"/>
<path fill="#ff7200" stroke="#3c3f41" stroke-width="0.60" d="M190.9 788.7L169.1 801.7A288.6 288.6 0 0 0 171.3 805.4L192.9 792.0A263.2 263.2 0 0 1 190.9 788.7Z"/>
<path fill="#ff8500" d="M192.9 792.0L171.3 805.4A288.6 288.6 0 0 0 171.8 806.1L193.3 792.6A263.2 263.2 0 0 1 192.9 792.0Z"/>
<path fill="#b34000" d="M193.3 792.6L171.8 806.1A288.6 288.6 0 0 0 172.4 807.1L193.9 793.5A263.2 263.2 0 0 1 193.3 792.6Z"/>
<path fill="#ff7200" d="M193.9 793.5L172.4 807.1A288.6 288.6 0 0 0 174.5 810.5L195.8 796.6A263.2 263.2 0 0 1 193.9 793.5Z"/>
<path fill="#ff8500" d="M195.8 796.6L174.5 810.5A288.6 288.6 0 0 0 176.3 813.2L197.5 799.1A263.2 263.2 0 0 1 195.8 796.6ZM197.5 799.1L176.3 813.2A288.6 288.6 0 0 0 178.6 816.5L199.5 802.1A263.2 263.2 0 0 1 197.5 799.1Z"/>
<path fill="#ff8500" stroke="#3c3f41" stroke-width="1.35" d="M199.5 802.1L178.6 816.5A288.6 288.6 0 0 0 184.4 824.7L204.8 809.6A263.2 263.2 0 0 1 199.5 802.1ZM204.8 809.6L184.4 824.7A288.6 288.6 0 0 0 200.6 844.6L219.6 827.7A263.2 263.2 0 0 1 204.8 809.6Z"/>
<path fill="#ff7200" d="M136.2 722.2L115.1 727.4A310.4 310.4 0 0 0 115.9 730.7L137.0 725.3A288.6 288.6 0 0 1 136.2 722.2ZM138.4 730.6L117.4 736.5A310.4 310.4 0 0 0 118.8 741.2L139.7 735.0A288.6 288.6 0 0 1 138.4 730.6Z"/>
<path fill="#a08468" d="M139.7 735.0L118.8 741.2A310.4 310.4 0 0 0 119.9 744.8L140.7 738.3A288.6 288.6 0 0 1 139.7 735.0Z"/>
<path fill="#ff7200" stroke="#3c3f41" stroke-width="1.35" d="M140.7 738.3L119.9 744.8A310.4 310.4 0 0 0 123.4 755.6L144.0 748.4A288.6 288.6 0 0 1 140.7 738.3Z"/>
<path fill="#e86c00" stroke="#3c3f41" stroke-width="1.35" d="M144.5 749.8L124.0 757.1A310.4 310.4 0 0 0 125.7 761.7L146.1 754.1A288.6 288.6 0 0 1 144.5 749.8Z"/>
<path fill="#ff7200" d="M147.1 756.9L126.8 764.7A310.4 310.4 0 0 0 127.4 766.3L147.7 758.3A288.6 288.6 0 0 1 147.1 756.9ZM148.8 761.1L128.6 769.3A310.4 310.4 0 0 0 129.4 771.3L149.6 763.0A288.6 288.6 0 0 1 148.8 761.1Z"/>
<path fill="#b34000" stroke="#3c3f41" stroke-width="1.35" d="M151.0 766.5L131.0 775.0A310.4 310.4 0 0 0 133.3 780.2L153.2 771.3A288.6 288.6 0 0 1 151.0 766.5Z"/>
<path fill="#7b7b7b" d="M154.4 774.1L134.6 783.2A310.4 310.4 0 0 0 136.5 787.1L156.1 777.7A288.6 288.6 0 0 1 154.4 774.1Z"/>
<path fill="#c08040" d="M156.1 777.7L136.5 787.1A310.4 310.4 0 0 0 138.1 790.5L157.7 780.9A288.6 288.6 0 0 1 156.1 777.7Z"/>
<path fill="#ff7200" stroke="#3c3f41" stroke-width="1.35" d="M157.9 781.3L138.4 791.0A310.4 310.4 0 0 0 144.7 803.0L163.7 792.5A288.6 288.6 0 0 1 157.9 781.3Z"/>
<path fill="#7b7b7b" d="M164.0 792.9L144.9 803.5A310.4 310.4 0 0 0 146.0 805.4L165.0 794.7A288.6 288.6 0 0 1 164.0 792.9Z"/>
<path fill="#ff7200" d="M165.0 794.7L146.0 805.4A310.4 310.4 0 0 0 148.4 809.6L167.2 798.6A288.6 288.6 0 0 1 165.0 794.7ZM167.5 799.0L148.7 810.1A310.4 310.4 0 0 0 150.6 813.4L169.3 802.1A288.6 288.6 0 0 1 167.5 799.0ZM169.3 802.1L150.6 813.4A310.4 310.4 0 0 0 151.7 815.1L170.3 803.7A288.6 288.6 0 0 1 169.3 802.1ZM170.3 803.7L151.7 815.1A310.4 310.4 0 0 0 153.9 818.6L172.3 807.0A288.6 288.6 0 0 1 170.3 803.7ZM172.3 807.0L153.9 818.6A310.4 310.4 0 0 0 156.7 823.1L175.0 811.1A288.6 288.6 0 0 1 172.3 807.0Z"/>
<path fill="#ff8500" d="M175.0 811.1L156.7 823.1A310.4 310.4 0 0 0 158.4 825.6L176.5 813.5A288.6 288.6 0 0 1 175.0 811.1Z"/>
<path fill="#ff8500" stroke="#3c3f41" stroke-width="0.60" d="M176.5 813.5L158.4 825.6A310.4 310.4 0 0 0 160.5 828.6L178.4 816.3A288.6 288.6 0 0 1 176.5 813.5Z"/>
<path fill="#ff7200" d="M178.4 816.3L160.5 828.6A310.4 310.4 0 0 0 161.3 829.8L179.2 817.4A288.6 288.6 0 0 1 178.4 816.3Z"/>
<path fill="#ff8500" stroke="#3c3f41" stroke-width="0.60" d="M179.2 817.4L161.3 829.8A310.4 310.4 0 0 0 162.6 831.7L180.4 819.1A288.6 288.6 0 0 1 179.2 817.4Z"/>
<path fill="#ff7200" d="M180.4 819.1L162.6 831.7A310.4 310.4 0 0 0 163.2 832.5L181.0 819.9A288.6 288.6 0 0 1 180.4 819.1Z"/>
<path fill="#ff8500" d="M181.0 819.9L163.2 832.5A310.4 310.4 0 0 0 165.5 835.8L183.2 823.0A288.6 288.6 0 0 1 181.0 819.9Z"/>
<path fill="#ff7200" d="M183.2 823.0L165.5 835.8A310.4 310.4 0 0 0 167.4 838.4L184.9 825.3A288.6 288.6 0 0 1 183.2 823.0Z"/>
<path fill="#7b7b7b" stroke="#3c3f41" stroke-width="0.60" d="M184.9 825.3L167.4 838.4A310.4 310.4 0 0 0 167.9 838.9L185.3 825.9A288.6 288.6 0 0 1 184.9 825.3Z"/>
<path fill="#ff7200" stroke="#3c3f41" stroke-width="1.35" d="M185.6 826.3L168.2 839.4A310.4 310.4 0 0 0 184.3 859.1L200.6 844.6A288.6 288.6 0 0 1 185.6 826.3Z"/>
<path fill="#b34000" d="M189.9 831.9L172.8 845.4A310.4 310.4 0 0 0 173.5 846.2L190.5 832.7A288.6 288.6 0 0 1 189.9 831.9ZM195.0 838.1L178.3 852.1A310.4 310.4 0 0 0 178.8 852.7L195.5 838.7A288.6 288.6 0 0 1 195.0 838.1Z"/>
<path fill="#ff8500" d="M115.2 727.8L97.4 732.2A328.7 328.7 0 0 0 98.1 735.0L115.8 730.5A310.4 310.4 0 0 1 115.2 727.8Z"/>
<path fill="#9a8066" d="M117.4 736.2L99.7 741.1A328.7 328.7 0 0 0 101.6 747.7L119.2 742.5A310.4 310.4 0 0 1 117.4 736.2Z"/>
<path fill="#d85c00" stroke="#3c3f41" stroke-width="1.35" d="M119.7 744.3L102.2 749.7A328.7 328.7 0 0 0 106.4 762.2L123.6 756.1A310.4 310.4 0 0 1 119.7 744.3Z"/>
<path fill="#e86c00" d="M123.7 756.4L106.5 762.5A328.7 328.7 0 0 0 108.2 767.3L125.4 760.9A310.4 310.4 0 0 1 123.7 756.4Z"/>
<path fill="#b34000" stroke="#3c3f41" stroke-width="1.35" d="M130.7 774.3L113.8 781.4A328.7 328.7 0 0 0 115.9 786.2L132.6 778.8A310.4 310.4 0 0 1 130.7 774.3Z"/>
<path fill="#7b7b7b" d="M132.8 779.3L116.1 786.7A328.7 328.7 0 0 0 117.8 790.4L134.4 782.7A310.4 310.4 0 0 1 132.8 779.3Z"/>
<path fill="#ff8500" d="M134.6 783.2L118.0 790.9A328.7 328.7 0 0 0 120.0 795.0L136.5 787.1A310.4 310.4 0 0 1 134.6 783.2Z"/>
<path fill="#b34000" stroke="#3c3f41" stroke-width="0.60" d="M137.9 790.0L121.5 798.1A328.7 328.7 0 0 0 123.7 802.7L140.0 794.3A310.4 310.4 0 0 1 137.9 790.0Z"/>
<path fill="#ff7200" d="M140.0 794.3L123.7 802.7A328.7 328.7 0 0 0 125.1 805.3L141.3 796.8A310.4 310.4 0 0 1 140.0 794.3Z"/>
<path fill="#ff8500" stroke="#3c3f41" stroke-width="0.60" d="M141.3 796.8L125.1 805.3A328.7 328.7 0 0 0 126.5 807.9L142.6 799.3A310.4 310.4 0 0 1 141.3 796.8Z"/>
<path fill="#ff8500" d="M142.6 799.3L126.5 807.9A328.7 328.7 0 0 0 128.9 812.3L144.9 803.4A310.4 310.4 0 0 1 142.6 799.3ZM144.9 803.4L128.9 812.3A328.7 328.7 0 0 0 129.5 813.4L145.4 804.4A310.4 310.4 0 0 1 144.9 803.4Z"/>
<path fill="#b34000" d="M146.5 806.3L130.6 815.4A328.7 328.7 0 0 0 132.0 817.8L147.9 808.7A310.4 310.4 0 0 1 146.5 806.3Z"/>
<path fill="#ff8500" d="M154.2 819.1L138.7 828.9A328.7 328.7 0 0 0 140.0 830.8L155.3 820.9A310.4 310.4 0 0 1 154.2 819.1Z"/>
<path fill="#b08050" d="M155.6 821.4L140.3 831.3A328.7 328.7 0 0 0 141.8 833.7L157.1 823.6A310.4 310.4 0 0 1 155.6 821.4Z"/>
<path fill="#ff8500" stroke="#3c3f41" stroke-width="1.35" d="M158.2 825.2L142.9 835.4A328.7 328.7 0 0 0 148.0 842.7L162.9 832.1A310.4 310.4 0 0 1 158.2 825.2Z"/>
<path fill="#7b7b7b" d="M164.6 834.6L149.8 845.3A328.7 328.7 0 0 0 151.2 847.1L165.9 836.3A310.4 310.4 0 0 1 164.6 834.6Z"/>
<path fill="#ff8500" d="M166.2 836.8L151.5 847.6A328.7 328.7 0 0 0 153.9 850.8L168.5 839.8A310.4 310.4 0 0 1 166.2 836.8Z"/>
<path fill="#e06000" stroke="#3c3f41" stroke-width="1.35" d="M169.8 841.5L155.3 852.6A328.7 328.7 0 0 0 160.8 859.6L175.0 848.1A310.4 310.4 0 0 1 169.8 841.5Z"/>
<path fill="#e86800" stroke="#3c3f41" stroke-width="1.35" d="M176.5 850.0L162.4 861.6A328.7 328.7 0 0 0 170.6 871.2L184.3 859.1A310.4 310.4 0 0 1 176.5 850.0Z"/>
<path fill="#ff7200" d="M97.3 731.7L83.9 735.0A342.5 342.5 0 0 0 84.8 738.8L98.2 735.3A328.7 328.7 0 0 1 97.3 731.7Z"/>
<path fill="#7b7b7b" stroke="#3c3f41" stroke-width="1.35" d="M99.7 740.8L86.4 744.5A342.5 342.5 0 0 0 88.1 750.6L101.3 746.6A328.7 328.7 0 0 1 99.7 740.8Z"/>
<path fill="#ff7200" stroke="#3c3f41" stroke-width="1.35" d="M101.9 748.6L88.7 752.6A342.5 342.5 0 0 0 93.2 766.5L106.3 761.9A328.7 328.7 0 0 1 101.9 748.6Z"/>
<path fill="#d85c00" stroke="#3c3f41" stroke-width="1.35" d="M106.7 763.3L93.7 767.9A342.5 342.5 0 0 0 95.4 772.4L108.3 767.6A328.7 328.7 0 0 1 106.7 763.3Z"/>
<path fill="#ff7200" d="M114.3 782.5L101.6 787.9A342.5 342.5 0 0 0 102.4 789.8L115.1 784.3A328.7 328.7 0 0 1 114.3 782.5Z"/>
<path fill="#7b7b7b" d="M117.3 789.3L104.7 795.0A342.5 342.5 0 0 0 105.7 797.2L118.3 791.4A328.7 328.7 0 0 1 117.3 789.3Z"/>
<path fill="#ff7200" d="M118.4 791.7L105.9 797.5A342.5 342.5 0 0 0 107.0 799.9L119.5 794.0A328.7 328.7 0 0 1 118.4 791.7Z"/>
<path fill="#e06000" stroke="#3c3f41" stroke-width="1.35" d="M121.7 798.6L109.4 804.8A342.5 342.5 0 0 0 113.2 812.2L125.4 805.8A328.7 328.7 0 0 1 121.7 798.6Z"/>
<path fill="#ff7200" d="M131.6 817.1L119.6 824.0A342.5 342.5 0 0 0 120.5 825.5L132.5 818.6A328.7 328.7 0 0 1 131.6 817.1ZM136.7 825.7L125.0 833.0A342.5 342.5 0 0 0 126.6 835.5L138.3 828.2A328.7 328.7 0 0 1 136.7 825.7ZM139.2 829.6L127.5 837.0A342.5 342.5 0 0 0 129.5 840.0L141.0 832.5A328.7 328.7 0 0 1 139.2 829.6Z"/>
<path fill="#d85c00" d="M141.7 833.5L130.1 841.0A342.5 342.5 0 0 0 133.1 845.5L144.5 837.8A328.7 328.7 0 0 1 141.7 833.5Z"/>
<path fill="#7b7b7b" d="M149.8 845.3L138.6 853.3A342.5 342.5 0 0 0 139.3 854.3L150.5 846.2A328.7 328.7 0 0 1 149.8 845.3ZM150.8 846.7L139.7 854.8A342.5 342.5 0 0 0 140.5 856.0L151.7 847.8A328.7 328.7 0 0 1 150.8 846.7ZM156.1 853.8L145.2 862.2A342.5 342.5 0 0 0 146.9 864.3L157.7 855.8A328.7 328.7 0 0 1 156.1 853.8Z"/>
<path fill="#ff7200" d="M166.5 866.5L156.0 875.4A342.5 342.5 0 0 0 157.1 876.8L167.6 867.8A328.7 328.7 0 0 1 166.5 866.5ZM167.8 868.0L157.3 877.0A342.5 342.5 0 0 0 160.3 880.4L170.6 871.2A328.7 328.7 0 0 1 167.8 868.0Z"/>
<path fill="#ff8500" d="M83.8 734.9L74.7 737.1A351.9 351.9 0 0 0 75.2 739.0L84.3 736.7A342.5 342.5 0 0 1 83.8 734.9Z"/>
<path fill="#7b7b7b" d="M86.4 744.8L77.4 747.3A351.9 351.9 0 0 0 78.3 750.6L87.3 748.0A342.5 342.5 0 0 1 86.4 744.8Z"/>
<path fill="#f57c00" stroke="#3c3f41" stroke-width="1.35" d="M88.9 753.1L79.9 755.9A351.9 351.9 0 0 0 83.7 767.6L92.6 764.5A342.5 342.5 0 0 1 88.9 753.1Z"/>
<path fill="#ff8500" stroke="#3c3f41" stroke-width="1.35" d="M93.4 767.0L84.6 770.2A351.9 351.9 0 0 0 86.8 776.2L95.6 772.9A342.5 342.5 0 0 1 93.4 767.0ZM109.4 804.8L100.9 808.9A351.9 351.9 0 0 0 105.0 816.8L113.3 812.5A342.5 342.5 0 0 1 109.4 804.8Z"/>
<path fill="#ff8500" d="M125.6 834.0L117.6 839.0A351.9 351.9 0 0 0 120.3 843.1L128.2 838.0A342.5 342.5 0 0 1 125.6 834.0ZM129.2 839.5L121.3 844.7A351.9 351.9 0 0 0 123.0 847.2L130.8 842.0A342.5 342.5 0 0 1 129.2 839.5ZM132.5 844.5L124.7 849.8A351.9 351.9 0 0 0 126.0 851.8L133.8 846.5A342.5 342.5 0 0 1 132.5 844.5ZM156.0 875.4L148.8 881.5A351.9 351.9 0 0 0 150.8 883.9L157.9 877.7A342.5 342.5 0 0 1 156.0 875.4ZM158.1 877.9L151.0 884.1A351.9 351.9 0 0 0 153.2 886.6L160.3 880.4A342.5 342.5 0 0 1 158.1 877.9Z"/>
</svg>
<svg class="abs" style="left:830px;top:258px" width="50" height="50" viewBox="830 258 50 50">
<path d="M852.4 299 Q846.5 290 841.7 282.4 A12.3 12.3 0 1 1 863.1 282.4 Q858.3 290 852.4 299 Z" fill="#dc4315"/>
<path d="M852.4 299 Q858.3 290 863.1 282.4 A12.3 12.3 0 0 0 852.4 263.9 Z" fill="#c4390e"/>
<circle cx="852.4" cy="276.2" r="7.85" fill="#ffffff"/>
<path d="M852.4 268.35 A7.85 7.85 0 0 1 852.4 284.05 Z" fill="#ebeced"/>
</svg>
<div class="t" style="left:880px;top:270px;font-size:21px;"><span class="c" style="width:21px;">所</span><span class="c" style="width:21px;">有</span><span class="c" style="width:21px;">对</span><span class="c" style="width:21px;">象</span></div>
<div class="t" style="left:836px;top:326px;font-size:21px;"><span class="c" style="width:21px;">最</span><span class="c" style="width:21px;">大</span><span class="c" style="width:21px;">对</span><span class="c" style="width:21px;">象</span>:</div>
<div class="abs" style="left:836px;top:360px;width:525px;height:680px;overflow:hidden;">
<div class="bul" style="left:17px;top:17.5px"></div><div class="row" style="left:43px;top:11.5px;letter-spacing:-0.40px"><span style="position:absolute;left:0.0px;letter-spacing:-0.85px">1,567</span><span style="position:absolute;left:53.5px;letter-spacing:-0.85px">kB</span><span style="position:absolute;left:81.3px;letter-spacing:-0.85px">(24.0%)</span><span style="position:absolute;left:154.1px;letter-spacing:0.00px">sun.</span><span style="position:absolute;left:193.7px;letter-spacing:0.00px">awt.</span><span style="position:absolute;left:232.1px;letter-spacing:0.00px">AppContext</span></div>
<div class="bul" style="left:17px;top:49.0px"></div><div class="row" style="left:43px;top:43.0px;letter-spacing:-0.40px"><span style="position:absolute;left:0.0px;letter-spacing:-0.85px">368</span><span style="position:absolute;left:37.5px;letter-spacing:-0.85px">kB</span><span style="position:absolute;left:65.4px;letter-spacing:-0.85px">(5.6%)</span><span style="position:absolute;left:127.3px;letter-spacing:-0.08px">bezier.</span><span style="position:absolute;left:188.2px;letter-spacing:-0.08px">BezierAnim$Demo</span></div>
<div class="bul" style="left:17px;top:80.5px"></div><div class="row" style="left:43px;top:74.5px;letter-spacing:-0.40px"><span style="position:absolute;left:0.0px;letter-spacing:-0.85px">352</span><span style="position:absolute;left:37.5px;letter-spacing:-0.85px">kB</span><span style="position:absolute;left:65.4px;letter-spacing:-0.85px">(5.4%)</span><span style="position:absolute;left:127.3px;letter-spacing:-0.22px">java.</span><span style="position:absolute;left:170.5px;letter-spacing:-0.22px">awt.</span><span style="position:absolute;left:208.1px;letter-spacing:-0.22px">EventDispatchThread</span></div>
<div class="bul" style="left:17px;top:112.0px"></div><div class="row" style="left:43px;top:106.0px;letter-spacing:-0.40px"><span style="position:absolute;left:0.0px;letter-spacing:-0.85px">263</span><span style="position:absolute;left:37.5px;letter-spacing:-0.85px">kB</span><span style="position:absolute;left:65.4px;letter-spacing:-0.85px">(4.0%)</span><span style="position:absolute;left:127.3px;letter-spacing:0.02px">sun.</span><span style="position:absolute;left:167.1px;letter-spacing:0.02px">font.</span><span style="position:absolute;left:207.8px;letter-spacing:0.02px">FontDesignMetrics</span></div>
<div class="bul" style="left:17px;top:143.5px"></div><div class="row" style="left:43px;top:137.5px;letter-spacing:-0.40px"><span style="position:absolute;left:0.0px;letter-spacing:-0.85px">263</span><span style="position:absolute;left:37.5px;letter-spacing:-0.85px">kB</span><span style="position:absolute;left:65.4px;letter-spacing:-0.85px">(4.0%)</span><span style="position:absolute;left:127.3px;letter-spacing:0.02px">sun.</span><span style="position:absolute;left:167.1px;letter-spacing:0.02px">font.</span><span style="position:absolute;left:207.8px;letter-spacing:0.02px">FontDesignMetrics</span></div>
<div class="bul" style="left:17px;top:175.0px"></div><div class="row" style="left:43px;top:169.0px;letter-spacing:-0.40px"><span style="position:absolute;left:0.0px;letter-spacing:-0.85px">194</span><span style="position:absolute;left:37.5px;letter-spacing:-0.85px">kB</span><span style="position:absolute;left:65.4px;letter-spacing:-0.85px">(3.0%)</span><span style="position:absolute;left:127.3px;letter-spacing:0.01px">bezier.</span><span style="position:absolute;left:189.0px;letter-spacing:0.01px">BezierAnim</span></div>
<div class="bul" style="left:17px;top:206.5px"></div><div class="row" style="left:43px;top:200.5px;letter-spacing:-0.40px"><span style="position:absolute;left:0.0px;letter-spacing:-0.85px">110</span><span style="position:absolute;left:36.0px;letter-spacing:-0.85px">kB</span><span style="position:absolute;left:63.9px;letter-spacing:-0.85px">(1.7%)</span><span style="position:absolute;left:125.8px;letter-spacing:-0.19px">java.</span><span style="position:absolute;left:169.2px;letter-spacing:-0.19px">util.</span><span style="position:absolute;left:200.7px;letter-spacing:-0.19px">zip.</span><span style="position:absolute;left:232.6px;letter-spacing:-0.19px">ZipFile$Source</span></div>
<div class="bul" style="left:17px;top:238.0px"></div><div class="row" style="left:43px;top:232.0px;letter-spacing:-0.40px"><span style="position:absolute;left:0.0px;letter-spacing:-0.55px">98,960</span><span style="position:absolute;left:66.1px;letter-spacing:-0.55px"><span class="c" style="width:20.5px;font-size:21px;letter-spacing:0;">字</span><span class="c" style="width:20.5px;font-size:21px;letter-spacing:0;">节</span></span><span style="position:absolute;left:111.8px;letter-spacing:-0.55px">(1.5%)</span><span style="position:absolute;left:175.6px;letter-spacing:-0.55px">class</span><span style="position:absolute;left:226.0px;letter-spacing:-0.36px">sun.</span><span style="position:absolute;left:264.2px;letter-spacing:-0.36px">swing.</span><span style="position:absolute;left:321.6px;letter-spacing:-0.36px">CachedPainter</span></div>
<div class="bul" style="left:17px;top:269.5px"></div><div class="row" style="left:43px;top:263.5px;letter-spacing:-0.40px"><span style="position:absolute;left:0.0px;letter-spacing:-0.55px">64,744</span><span style="position:absolute;left:66.1px;letter-spacing:-0.55px"><span class="c" style="width:20.5px;font-size:21px;letter-spacing:0;">字</span><span class="c" style="width:20.5px;font-size:21px;letter-spacing:0;">节</span></span><span style="position:absolute;left:111.8px;letter-spacing:-0.55px">(1.0%)</span><span style="position:absolute;left:175.6px;letter-spacing:-0.55px">class</span><span style="position:absolute;left:226.0px;letter-spacing:0.03px">com.</span><span style="position:absolute;left:271.9px;letter-spacing:0.03px">jprofiler.</span><span style="position:absolute;left:344.6px;letter-spacing:0.03px">agent.</span><span style="position:absolute;left:403.1px;letter-spacing:0.03px">d.</span><span style="position:absolute;left:420.6px;letter-spacing:0.03px">a</span></div>
<div class="bul" style="left:17px;top:301.0px"></div><div class="row" style="left:43px;top:295.0px;letter-spacing:-0.40px"><span style="position:absolute;left:0.0px;letter-spacing:-0.55px">63,096</span><span style="position:absolute;left:66.1px;letter-spacing:-0.55px"><span class="c" style="width:20.5px;font-size:21px;letter-spacing:0;">字</span><span class="c" style="width:20.5px;font-size:21px;letter-spacing:0;">节</span></span><span style="position:absolute;left:111.8px;letter-spacing:-0.55px">(1.0%)</span><span style="position:absolute;left:175.6px;letter-spacing:-0.55px">class</span><span style="position:absolute;left:226.0px;letter-spacing:-0.14px">java.</span><span style="position:absolute;left:269.5px;letter-spacing:-0.14px">lang.</span><span style="position:absolute;left:314.2px;letter-spacing:-0.14px">invoke.</span><span style="position:absolute;left:379.7px;letter-spacing:-0.14px">MethodType</span></div>
<div class="bul" style="left:17px;top:332.5px"></div><div class="row" style="left:43px;top:326.5px;letter-spacing:-0.40px"><span style="position:absolute;left:0.0px;letter-spacing:-0.55px">53,392</span><span style="position:absolute;left:66.1px;letter-spacing:-0.55px"><span class="c" style="width:20.5px;font-size:21px;letter-spacing:0;">字</span><span class="c" style="width:20.5px;font-size:21px;letter-spacing:0;">节</span></span><span style="position:absolute;left:111.8px;letter-spacing:-0.55px">(0.8%)</span><span style="position:absolute;left:175.6px;letter-spacing:-0.55px">class</span><span style="position:absolute;left:226.0px;letter-spacing:-0.13px">sun.</span><span style="position:absolute;left:265.1px;letter-spacing:-0.13px">security.</span><span style="position:absolute;left:340.2px;letter-spacing:-0.13px">util.</span><span style="position:absolute;left:371.7px;letter-spacing:-0.13px">KnownOIDs</span></div>
<div class="bul" style="left:17px;top:364.0px"></div><div class="row" style="left:43px;top:358.0px;letter-spacing:-0.40px"><span style="position:absolute;left:0.0px;letter-spacing:-0.55px">53,264</span><span style="position:absolute;left:66.1px;letter-spacing:-0.55px"><span class="c" style="width:20.5px;font-size:21px;letter-spacing:0;">字</span><span class="c" style="width:20.5px;font-size:21px;letter-spacing:0;">节</span></span><span style="position:absolute;left:111.8px;letter-spacing:-0.55px">(0.8%)</span><span style="position:absolute;left:175.6px;letter-spacing:-0.05px">sun.</span><span style="position:absolute;left:215.0px;letter-spacing:-0.05px">security.</span><span style="position:absolute;left:290.7px;letter-spacing:-0.05px">provider.</span><span style="position:absolute;left:370.4px;letter-spacing:-0.05px">Sun</span></div>
<div class="bul" style="left:17px;top:395.5px"></div><div class="row" style="left:43px;top:389.5px;letter-spacing:-0.40px"><span style="position:absolute;left:0.0px;letter-spacing:-0.55px">38,104</span><span style="position:absolute;left:66.1px;letter-spacing:-0.55px"><span class="c" style="width:20.5px;font-size:21px;letter-spacing:0;">字</span><span class="c" style="width:20.5px;font-size:21px;letter-spacing:0;">节</span></span><span style="position:absolute;left:111.8px;letter-spacing:-0.55px">(0.6%)</span><span style="position:absolute;left:175.6px;letter-spacing:-0.55px">class</span><span style="position:absolute;left:226.0px;letter-spacing:-0.45px">sun.</span><span style="position:absolute;left:263.9px;letter-spacing:-0.45px">java2d.</span><span style="position:absolute;left:328.5px;letter-spacing:-0.45px">loops.</span><span style="position:absolute;left:381.9px;letter-spacing:-0.45px">GraphicsPrimitiveMgr</span></div>
<div class="bul" style="left:17px;top:427.0px"></div><div class="row" style="left:43px;top:421.0px;letter-spacing:-0.40px"><span style="position:absolute;left:0.0px;letter-spacing:-0.55px">35,088</span><span style="position:absolute;left:66.1px;letter-spacing:-0.55px"><span class="c" style="width:20.5px;font-size:21px;letter-spacing:0;">字</span><span class="c" style="width:20.5px;font-size:21px;letter-spacing:0;">节</span></span><span style="position:absolute;left:111.8px;letter-spacing:-0.55px">(0.5%)</span><span style="position:absolute;left:175.6px;letter-spacing:-0.21px">java.</span><span style="position:absolute;left:218.8px;letter-spacing:-0.21px">util.</span><span style="position:absolute;left:250.1px;letter-spacing:-0.21px">concurrent.</span><span style="position:absolute;left:352.8px;letter-spacing:-0.21px">ConcurrentHashMap</span></div>
<div class="bul" style="left:17px;top:458.5px"></div><div class="row" style="left:43px;top:452.5px;letter-spacing:-0.40px"><span style="position:absolute;left:0.0px;letter-spacing:-0.55px">31,008</span><span style="position:absolute;left:66.1px;letter-spacing:-0.55px"><span class="c" style="width:20.5px;font-size:21px;letter-spacing:0;">字</span><span class="c" style="width:20.5px;font-size:21px;letter-spacing:0;">节</span></span><span style="position:absolute;left:111.8px;letter-spacing:-0.55px">(0.5%)</span><span style="position:absolute;left:175.6px;letter-spacing:-0.55px">class</span><span style="position:absolute;left:226.0px;letter-spacing:-0.46px">sun.</span><span style="position:absolute;left:263.9px;letter-spacing:-0.46px">awt.</span><span style="position:absolute;left:300.5px;letter-spacing:-0.46px">ExtendedKeyCodes</span></div>
<div class="bul" style="left:17px;top:490.0px"></div><div class="row" style="left:43px;top:484.0px;letter-spacing:-0.40px"><span style="position:absolute;left:0.0px;letter-spacing:-0.55px">24,304</span><span style="position:absolute;left:66.1px;letter-spacing:-0.55px"><span class="c" style="width:20.5px;font-size:21px;letter-spacing:0;">字</span><span class="c" style="width:20.5px;font-size:21px;letter-spacing:0;">节</span></span><span style="position:absolute;left:111.8px;letter-spacing:-0.55px">(0.4%)</span><span style="position:absolute;left:175.6px;letter-spacing:-0.13px">sun.</span><span style="position:absolute;left:214.7px;letter-spacing:-0.13px">awt.</span><span style="position:absolute;left:252.7px;letter-spacing:-0.13px">Win32FontManager</span></div>
<div class="bul" style="left:17px;top:521.5px"></div><div class="row" style="left:43px;top:515.5px;letter-spacing:-0.40px"><span style="position:absolute;left:0.0px;letter-spacing:-0.55px">21,416</span><span style="position:absolute;left:66.1px;letter-spacing:-0.55px"><span class="c" style="width:20.5px;font-size:21px;letter-spacing:0;">字</span><span class="c" style="width:20.5px;font-size:21px;letter-spacing:0;">节</span></span><span style="position:absolute;left:111.8px;letter-spacing:-0.55px">(0.3%)</span><span style="position:absolute;left:175.6px;letter-spacing:-0.55px">class</span><span style="position:absolute;left:226.0px;letter-spacing:0.03px">java.</span><span style="position:absolute;left:270.3px;letter-spacing:0.03px">lang.</span><span style="position:absolute;left:315.8px;letter-spacing:0.03px">runtime.</span><span style="position:absolute;left:391.7px;letter-spacing:0.03px">ObjectMethods</span></div>
<div class="bul" style="left:17px;top:553.0px"></div><div class="row" style="left:43px;top:547.0px;letter-spacing:-0.40px"><span style="position:absolute;left:0.0px;letter-spacing:-0.55px">20,200</span><span style="position:absolute;left:66.1px;letter-spacing:-0.55px"><span class="c" style="width:20.5px;font-size:21px;letter-spacing:0;">字</span><span class="c" style="width:20.5px;font-size:21px;letter-spacing:0;">节</span></span><span style="position:absolute;left:111.8px;letter-spacing:-0.55px">(0.3%)</span><span style="position:absolute;left:175.6px;letter-spacing:0.05px">java.</span><span style="position:absolute;left:219.9px;letter-spacing:0.05px">lang.</span><span style="position:absolute;left:265.5px;letter-spacing:0.05px">Module</span></div>
<div class="bul" style="left:17px;top:584.5px"></div><div class="row" style="left:43px;top:578.5px;letter-spacing:-0.40px"><span style="position:absolute;left:0.0px;letter-spacing:-0.55px">19,656</span><span style="position:absolute;left:66.1px;letter-spacing:-0.55px"><span class="c" style="width:20.5px;font-size:21px;letter-spacing:0;">字</span><span class="c" style="width:20.5px;font-size:21px;letter-spacing:0;">节</span></span><span style="position:absolute;left:111.8px;letter-spacing:-0.55px">(0.3%)</span><span style="position:absolute;left:175.6px;letter-spacing:-0.29px">java.</span><span style="position:absolute;left:218.4px;letter-spacing:-0.29px">lang.</span><span style="position:absolute;left:262.4px;letter-spacing:-0.29px">invoke.</span><span style="position:absolute;left:326.9px;letter-spacing:-0.29px">LambdaForm</span></div>
<div class="bul" style="left:17px;top:616.0px"></div><div class="row" style="left:43px;top:610.0px;letter-spacing:-0.40px"><span style="position:absolute;left:0.0px;letter-spacing:-0.55px">17,712</span><span style="position:absolute;left:66.1px;letter-spacing:-0.55px"><span class="c" style="width:20.5px;font-size:21px;letter-spacing:0;">字</span><span class="c" style="width:20.5px;font-size:21px;letter-spacing:0;">节</span></span><span style="position:absolute;left:111.8px;letter-spacing:-0.55px">(0.3%)</span><span style="position:absolute;left:175.6px;letter-spacing:-0.17px">java.</span><span style="position:absolute;left:218.9px;letter-spacing:-0.17px">io.</span><span style="position:absolute;left:240.4px;letter-spacing:-0.17px">PrintStream</span></div>
<div class="bul" style="left:17px;top:647.5px"></div><div class="row" style="left:43px;top:641.5px;letter-spacing:-0.40px"><span style="position:absolute;left:0.0px;letter-spacing:-0.55px">17,712</span><span style="position:absolute;left:66.1px;letter-spacing:-0.55px"><span class="c" style="width:20.5px;font-size:21px;letter-spacing:0;">字</span><span class="c" style="width:20.5px;font-size:21px;letter-spacing:0;">节</span></span><span style="position:absolute;left:111.8px;letter-spacing:-0.55px">(0.3%)</span><span style="position:absolute;left:175.6px;letter-spacing:-0.17px">java.</span><span style="position:absolute;left:218.9px;letter-spacing:-0.17px">io.</span><span style="position:absolute;left:240.4px;letter-spacing:-0.17px">PrintStream</span></div>
</div>
<svg class="abs" style="left:1090px;top:1036px" width="24" height="14" viewBox="1090 1036 24 14"><path d="M1097 1041 L1107 1041 L1102 1046.5 Z" fill="#bbbbbb"/></svg>
<div class="lg" style="left:28px;background:#ff8500"></div>
<div class="t" style="left:63px;top:1078px;font-size:21px;"><span class="c" style="width:21px;">实</span><span class="c" style="width:21px;">例</span></div>
<div class="lg" style="left:126px;background:#b34000"></div>
<div class="t" style="left:161px;top:1078px;font-size:21px;"><span class="c" style="width:21px;">对</span><span class="c" style="width:21px;">象</span><span class="c" style="width:21px;">数</span><span class="c" style="width:21px;">组</span></div>
<div class="lg" style="left:266px;background:#7b7b7b"></div>
<div class="t" style="left:301px;top:1078px;font-size:21px;"><span class="c" style="width:21px;">原</span><span class="c" style="width:21px;">始</span><span class="c" style="width:21px;">数</span><span class="c" style="width:21px;">组</span></div>
<div class="lg" style="left:406px;background:#688868"></div>
<div class="t" style="left:441px;top:1078px;font-size:21px;"><span class="c" style="width:21px;">较</span><span class="c" style="width:21px;">小</span><span class="c" style="width:21px;">的</span><span class="c" style="width:21px;">对</span><span class="c" style="width:21px;">象</span></div>
<div class="lg" style="left:28px;width:14px;background:#ff7200"></div>
</body>
</html>
